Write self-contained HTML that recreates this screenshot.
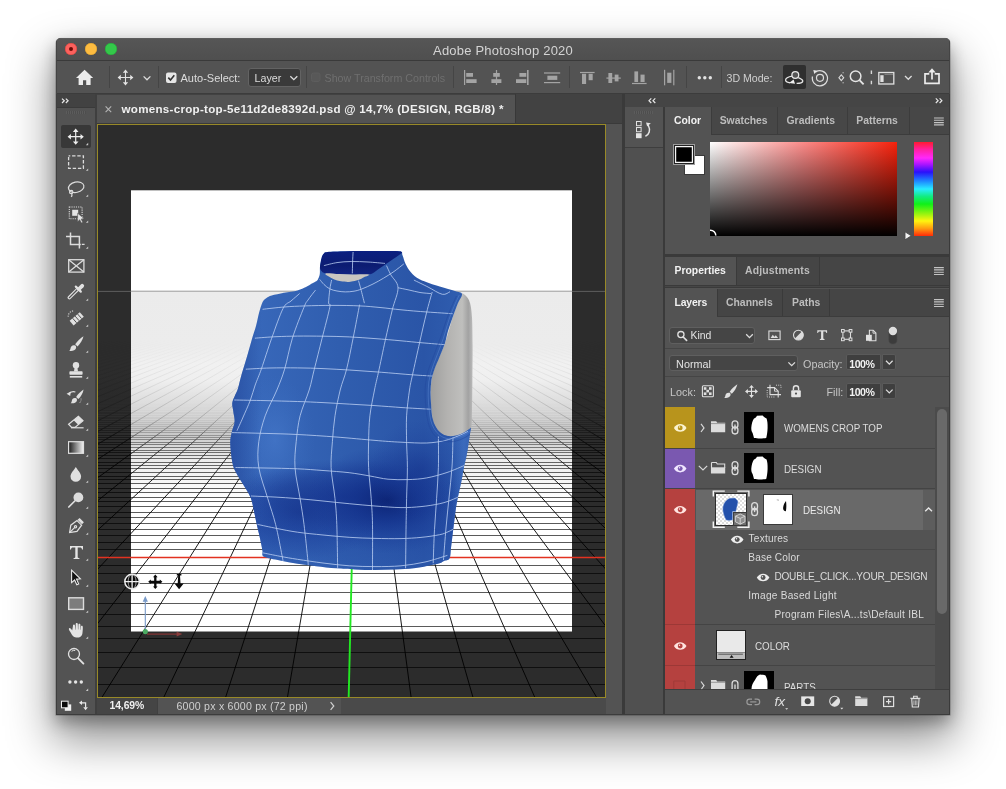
<!DOCTYPE html>
<html><head><meta charset="utf-8"><title>Adobe Photoshop 2020</title>
<style>
*{box-sizing:border-box;margin:0;padding:0}
html,body{width:1006px;height:789px;overflow:hidden;background:#fff;font-family:"Liberation Sans",sans-serif;}
body{position:relative}
.abs{position:absolute}
#win{position:absolute;left:56px;top:38px;width:894px;height:677px;background:#535353;border-radius:5px 5px 0 0;
 box-shadow:0 -1px 0 0 rgba(255,255,255,.5),0 0 0 .5px rgba(0,0,0,.3),0 22px 45px 4px rgba(0,0,0,.42),0 7px 16px rgba(0,0,0,.3);}
#clip{position:absolute;left:0;top:0;width:894px;height:677px;border-radius:5px 5px 0 0;overflow:hidden;will-change:transform}
.t{position:absolute;white-space:nowrap;color:#d6d6d6;font-size:11px;line-height:14px}
.b{font-weight:bold}
.sep{position:absolute;width:1px;background:#424242}
svg{position:absolute;overflow:visible}
</style></head><body>
<div id="win"><div id="clip">
<div id="c" style="position:absolute;left:-56px;top:-38px;width:1006px;height:789px">
<!-- title bar -->
<div class="abs" style="left:56px;top:38px;width:894px;height:22px;background:linear-gradient(#565656,#4f4f4f)"></div>
<div class="abs" style="left:56px;top:38px;width:894px;height:1px;background:#5c5c5c"></div>
<div class="abs" style="left:56px;top:60px;width:894px;height:1px;background:#3a3a3a"></div>
<div class="abs" style="left:65px;top:43px;width:12px;height:12px;border-radius:6px;background:#fc615d;box-shadow:inset 0 0 0 .5px #d8453f"></div>
<div class="abs" style="left:69px;top:47px;width:4px;height:4px;border-radius:2px;background:#6d0a05"></div>
<div class="abs" style="left:85px;top:43px;width:12px;height:12px;border-radius:6px;background:#fdbc40;box-shadow:inset 0 0 0 .5px #dba02f"></div>
<div class="abs" style="left:105px;top:43px;width:12px;height:12px;border-radius:6px;background:#34c84a;box-shadow:inset 0 0 0 .5px #24a83a"></div>
<div class="t" style="left:56px;top:43px;width:894px;text-align:center;font-size:13px;line-height:15px;color:#d4d4d4;letter-spacing:.2px">Adobe Photoshop 2020</div>
<!-- options bar -->
<div class="abs" style="left:56px;top:61px;width:894px;height:32px;background:#535353"></div>
<div class="abs" style="left:56px;top:93px;width:894px;height:1px;background:#3c3c3c"></div>
<!-- options bar content -->
<div class="sep" style="left:109px;top:66px;height:22px;background:#454545"></div>
<div class="sep" style="left:158px;top:66px;height:22px;background:#454545"></div>
<div class="sep" style="left:306px;top:66px;height:22px;background:#454545"></div>
<div class="sep" style="left:453px;top:66px;height:22px;background:#454545"></div>
<div class="sep" style="left:569px;top:66px;height:22px;background:#454545"></div>
<div class="sep" style="left:686px;top:66px;height:22px;background:#454545"></div>
<div class="sep" style="left:721px;top:66px;height:22px;background:#454545"></div>
<div class="abs" style="left:247.5px;top:68px;width:53px;height:19px;background:#3a3a3a;border:1px solid #636363;border-radius:3px"></div>
<div class="abs" style="left:783px;top:65px;width:23px;height:24px;background:#2f2f2f;border-radius:2px"></div>
<div class="t" style="left:180.5px;top:71px;font-size:11px;color:#dcdcdc">Auto-Select:</div>
<div class="t" style="left:254.5px;top:71px;font-size:10.7px;color:#dcdcdc">Layer</div>
<div class="t" style="left:324.5px;top:71px;font-size:10.7px;color:#6f6f6f">Show Transform Controls</div>
<div class="t" style="left:726.5px;top:71px;font-size:10.6px;color:#d0d0d0">3D Mode:</div>
<svg style="left:0;top:0" width="1006" height="789" viewBox="0 0 1006 789">
<!-- home -->
<path d="M84.6 69.8 L76 77.9 L78.6 77.9 L78.6 85 L83 85 L83 80.2 L86.2 80.2 L86.2 85 L90.6 85 L90.6 77.9 L93.2 77.9 Z" fill="#ececec"/>
<!-- move tool -->
<g stroke="#e4e4e4" stroke-width="1.1" fill="none"><path d="M125.5 71.5V83.5M119.5 77.5H131.5"/></g>
<g fill="#e4e4e4"><path d="M125.5 69.6l2.7 3.2h-5.4zM125.5 85.4l2.7-3.2h-5.4zM117.6 77.5l3.2-2.7v5.4zM133.4 77.5l-3.2-2.7v5.4z"/></g>
<path d="M143.6 76.4l3.4 3.4 3.4-3.4" stroke="#dcdcdc" stroke-width="1.3" fill="none"/>
<!-- checkbox checked -->
<rect x="166" y="72.5" width="10.5" height="10.5" rx="2" fill="#e6e6e6"/>
<path d="M168.3 77.6l2.2 2.4 3.8-4.8" stroke="#333" stroke-width="1.6" fill="none"/>
<path d="M290.3 76.2l3.5 3.5 3.5-3.5" stroke="#dcdcdc" stroke-width="1.3" fill="none"/>
<!-- disabled checkbox -->
<rect x="311.5" y="73" width="8.5" height="8.5" rx="2" fill="#585858" stroke="#5d5d5d" stroke-width="1"/>
<!-- align icons -->
<g fill="#a4a4a4">
<rect x="464" y="70" width="1.2" height="15"/><rect x="466.2" y="73" width="6.8" height="3.8"/><rect x="466.2" y="79.2" width="10.4" height="3.8"/>
<rect x="495.9" y="70" width="1.2" height="15"/><rect x="493.2" y="73" width="6.6" height="3.8"/><rect x="491.4" y="79.2" width="10" height="3.8"/>
<rect x="527" y="70" width="1.6" height="15"/><rect x="519.4" y="73" width="6.9" height="3.8"/><rect x="516" y="79.2" width="10.3" height="3.8"/>
<rect x="544" y="72.4" width="16.2" height="1.2"/><rect x="544" y="82" width="16.2" height="1.2"/><rect x="547.4" y="75.7" width="9.9" height="4.2"/>
<rect x="580" y="71.9" width="14.6" height="1.2"/><rect x="582" y="73.8" width="4.1" height="10.2"/><rect x="588.6" y="73.8" width="4.1" height="6.4"/>
<rect x="606.4" y="77.5" width="14.4" height="1.2"/><rect x="608.4" y="73" width="3.8" height="10"/><rect x="614.7" y="74.6" width="3.8" height="6.8"/>
<rect x="632" y="82.9" width="14.6" height="1.2"/><rect x="634.4" y="71.4" width="3.7" height="10.6"/><rect x="640.5" y="74.6" width="4.1" height="7.4"/>
<rect x="664" y="69.8" width="1.2" height="15.5"/><rect x="673.2" y="69.8" width="1.2" height="15.5"/><rect x="667.2" y="72.7" width="4.2" height="10.2"/>
</g>
<g fill="#e2e2e2"><circle cx="699.3" cy="77.8" r="1.7"/><circle cx="704.8" cy="77.8" r="1.7"/><circle cx="710.3" cy="77.8" r="1.7"/></g>
<!-- orbit -->
<g stroke="#e6e6e6" stroke-width="1.3" fill="none">
<circle cx="795.3" cy="75" r="3.4" fill="#555"/>
<path d="M792.2 76.1C788 76.6 785.200 78.600 785.600 80.400 C786.000 81.800 788.000 82.700 790.000 82.900"/>
<path d="M796.6 83.300 C800.000 83.400 803.000 82.600 802.800 81.000 C802.600 79.700 800.500 78.600 798.300 77.700"/>
</g>
<path d="M789 82.900 l4.600-3.400 l1.400 4.200z" fill="#f0f0f0"/>
<!-- roll -->
<g stroke="#dcdcdc" stroke-width="1.2" fill="none">
<path d="M815.700 71.900 A7.600 7.600 0 1 1 812.500 76.500"/>
<circle cx="820" cy="77.800" r="3.500"/>
</g>
<path d="M813.300 70.000 l4.000 0.800 l-3.000 3.200z" fill="#e8e8e8"/>
<!-- drag small -->
<path d="M841.300 74.800 l2.400 2.900 l-2.400 2.900 l-2.400 -2.900z" stroke="#d8d8d8" stroke-width="1.1" fill="none"/>
<g fill="#bdbdbd"><rect x="842.600" y="72.000" width="1" height="1.400"/><rect x="842.600" y="82.000" width="1" height="1.400"/></g>
<!-- search -->
<g stroke="#e4e4e4" stroke-width="1.500" fill="none"><circle cx="855.600" cy="76.300" r="5.300"/><path d="M859.500 80.200 L863.600 84.300" stroke-width="1.900"/></g>
<g fill="#d8d8d8"><path d="M870.700 70.500h1.400v3.400h-1.400zM870.700 80.800h1.400v3.400h-1.400z"/></g>
<!-- workspace -->
<rect x="878.800" y="72.500" width="15" height="11.500" stroke="#e0e0e0" stroke-width="1.300" fill="none"/>
<rect x="880.300" y="75.200" width="3.300" height="6.800" fill="#e0e0e0"/>
<path d="M884.500 74.300H893" stroke="#9a9a9a" stroke-width=".8"/>
<path d="M905 76l3.300 3.300 3.300-3.300" stroke="#dcdcdc" stroke-width="1.300" fill="none"/>
<!-- share -->
<g stroke="#ececec" stroke-width="1.700" fill="none"><path d="M929.300 73.900H925v9.400h14v-9.400h-4.300"/><path d="M932 79.500V70"/></g>
<path d="M932 68.300l3.700 4.200h-7.400z" fill="#ececec"/>
</svg>
<!-- left border -->
<div class="abs" style="left:56px;top:94px;width:1px;height:621px;background:#3e3e3e"></div>
<!-- toolbar header -->
<div class="abs" style="left:57px;top:94px;width:37.5px;height:12.5px;background:#424242"></div>
<div class="abs" style="left:57px;top:106.5px;width:37.5px;height:1px;background:#3a3a3a"></div>
<div class="abs" style="left:94.5px;top:94px;width:2.5px;height:621px;background:#3f3f3f"></div>
<!-- grip -->
<div class="abs" style="left:65.5px;top:111px;width:20px;height:3px;background:repeating-linear-gradient(90deg,#606060 0 1px,#4b4b4b 1px 2px);opacity:.7"></div>
<!-- active tool -->
<div class="abs" style="left:60.5px;top:124.5px;width:30.5px;height:23px;background:#383838;border-radius:2px"></div>
<!-- tab bar -->
<div class="abs" style="left:97px;top:94px;width:526px;height:30px;background:#424242"></div>
<div class="abs" style="left:97px;top:94.5px;width:417.5px;height:28px;background:#535353"></div>
<div class="abs" style="left:514.5px;top:94px;width:1px;height:29px;background:#383838"></div>
<div class="abs" style="left:97px;top:122.5px;width:526px;height:1.5px;background:#3a3a3a"></div>
<div class="t b" style="left:121.5px;top:102px;font-size:11.6px;color:#f0f0f0;letter-spacing:.28px" id="tabtxt">womens-crop-top-5e11d2de8392d.psd @ 14,7% (DESIGN, RGB/8) *</div>
<!-- status bar -->
<div class="abs" style="left:97px;top:698px;width:526px;height:17px;background:#4a4a4a"></div><div class="abs" style="left:606px;top:698px;width:17px;height:17px;background:#535353"></div>
<div class="abs" style="left:97px;top:698px;width:60px;height:17px;background:#454545"></div>
<div class="abs" style="left:157px;top:698px;width:184px;height:17px;background:#535353"></div>
<div class="abs" style="left:157px;top:698px;width:1px;height:17px;background:#404040"></div>
<div class="t" style="left:109.5px;top:699px;font-size:10.4px;color:#f0f0f0;font-weight:bold;letter-spacing:-.1px">14,69%</div>
<div class="t" style="left:176.5px;top:699px;font-size:10.6px;color:#cfcfcf;letter-spacing:.22px" id="sttxt">6000 px x 6000 px (72 ppi)</div>
<svg style="left:0;top:0" width="1006" height="789" viewBox="0 0 1006 789">
<g stroke="#e8e8e8" stroke-width="1.2" fill="none">
<path d="M62 98.600l2.300 2.200 -2.300 2.200M65.800 98.600l2.300 2.200 -2.300 2.200"/>
</g>
<path d="M105.600 106.300l5.600 5.800M111.200 106.300l-5.600 5.800" stroke="#b4b4b4" stroke-width="1.100" fill="none"/>
<path d="M330.600 702.200l3.200 3.800 -3.200 3.800" stroke="#d0d0d0" stroke-width="1.200" fill="none"/>
<!-- sub-tool triangles -->
<g fill="#c8c8c8">
<path d="M88.200 142.800v2.400h-2.400z"/><path d="M88.200 168.400v2.400h-2.400z"/><path d="M88.200 194.400v2.400h-2.400z"/><path d="M88.200 220.400v2.400h-2.400z"/><path d="M88.200 246.400v2.400h-2.400z"/>
<path d="M88.200 298.400v2.400h-2.400z"/><path d="M88.200 324.400v2.400h-2.400z"/><path d="M88.200 350.400v2.400h-2.400z"/><path d="M88.200 376.400v2.400h-2.400z"/><path d="M88.200 402.400v2.400h-2.400z"/>
<path d="M88.200 428.400v2.400h-2.400z"/><path d="M88.200 454.400v2.400h-2.400z"/><path d="M88.200 480.400v2.400h-2.400z"/><path d="M88.200 506.400v2.400h-2.400z"/><path d="M88.200 532.400v2.400h-2.400z"/>
<path d="M88.200 558.400v2.400h-2.400z"/><path d="M88.200 584.400v2.400h-2.400z"/><path d="M88.200 610.400v2.400h-2.400z"/><path d="M88.200 636.400v2.400h-2.400z"/><path d="M88.200 688.600v2.400h-2.400z"/>
</g>
<!-- move tool -->
<g stroke="#eeeeee" stroke-width="1.200" fill="none"><path d="M75.700 130.500V143M69.500 136.700H82"/></g>
<g fill="#eeeeee"><path d="M75.700 128.600l2.800 3.300h-5.600zM75.700 144.800l2.800-3.300h-5.600zM67.600 136.700l3.300-2.800v5.600zM83.800 136.700l-3.300-2.800v5.600z"/></g>
<!-- marquee -->
<rect x="68.600" y="155.800" width="14.800" height="12.600" stroke="#dcdcdc" stroke-width="1.300" stroke-dasharray="3.400 1.800" stroke-dashoffset="1.700" fill="none"/>
<!-- lasso -->
<g stroke="#dcdcdc" stroke-width="1.200" fill="none">
<ellipse cx="76.200" cy="187.200" rx="7.800" ry="5.200" transform="rotate(-12 76.200 187.200)"/>
<circle cx="71.200" cy="192" r="1.700"/><path d="M71.800 193.600c.4 1.300 .2 2.300-.6 3.200"/>
</g>
<!-- object select -->
<rect x="69.300" y="207" width="12.800" height="11.800" stroke="#dcdcdc" stroke-width="1.100" stroke-dasharray="1.100 1.100" fill="none"/>
<rect x="72.200" y="209.800" width="6" height="6" fill="#e4e4e4"/>
<path d="M77.600 213.200l6.600 5.400 -3 .5 1.600 3.200 -1.500 .7 -1.600-3.200 -2.100 2z" fill="#e4e4e4" stroke="#535353" stroke-width=".6"/>
<!-- crop -->
<g stroke="#dcdcdc" stroke-width="1.500" fill="none"><path d="M70.500 232.600V244.400H80.800M66 236.400H79.400V248.400"/><path d="M81.800 244.400h2.800" stroke-width="1.200"/></g>
<!-- frame -->
<g stroke="#dcdcdc" stroke-width="1.300" fill="none"><rect x="68.700" y="259.700" width="15.200" height="12.400"/><path d="M68.700 259.700L83.900 272.100M83.900 259.700L68.700 272.100"/></g>
<!-- eyedropper -->
<g stroke="#e0e0e0" fill="none"><path d="M69.400 297.600L77.600 289.400" stroke-width="3.600" stroke-linecap="round"/><path d="M69.400 297.600L77.200 289.800" stroke="#535353" stroke-width="1.300" stroke-linecap="round"/><path d="M75.800 286.600l5 5" stroke-width="2.200" stroke-linecap="round"/><path d="M79 289L82.200 285.800" stroke-width="3.800" stroke-linecap="round"/></g>
<!-- healing -->
<g><path d="M69.600 320.800L79.800 312.200 83.800 316.800 73.600 325.400z" fill="#e0e0e0"/><g stroke="#535353" stroke-width="1"><path d="M72.600 318.200l4 4.600M75.100 316.100l4 4.600M77.600 314l4 4.600"/></g>
<path d="M68.200 316.800c-.2-3.200 2.300-5.800 5.600-6" stroke="#cfcfcf" stroke-width="1.100" stroke-dasharray="1.200 1.200" fill="none"/></g>
<!-- brush -->
<g fill="#e0e0e0"><path d="M83.500 336.200c-2.800 1.600-6.300 5-8.300 8l2.300 2.200c2.700-2.400 5.200-6.600 6-10.200z"/><path d="M74.300 345.200c-2.200-.2-3.600 1.200-3.800 3.200-.1 1-.5 1.800-1.200 2.400 2.800 .6 5.800-.3 6.700-2.500 .4-1.100 0-2.200-.6-2.800z"/></g>
<!-- stamp -->
<g fill="#e0e0e0"><circle cx="76" cy="365.200" r="3.200"/><path d="M74.600 367.600h2.800l.6 4h-4z"/><rect x="69.400" y="371.200" width="13.200" height="3.600" rx=".8"/><rect x="69.800" y="376" width="12.400" height="1.600"/></g>
<!-- history brush -->
<g fill="#e0e0e0"><path d="M83.600 389.400c-2.600 1.500-5.600 4.600-7.500 7.600l2.200 2.100c2.500-2.300 4.700-6.200 5.300-9.700z"/><path d="M75.300 398c-2-.2-3.300 1.100-3.500 3-.1 .9-.4 1.600-1.100 2.200 2.600 .5 5.300-.3 6.100-2.300 .4-1 .1-2.100-.5-2.700z"/><path d="M66.600 393.800l4.200-2.400 -.6 4.600z"/></g>
<path d="M69.400 393.200c1.800-1.400 4.200-1.800 6-1.200" stroke="#e0e0e0" stroke-width="1.100" fill="none"/>
<path d="M81 398.500c.3 1.800-.2 3.300-1.500 4.500" stroke="#bdbdbd" stroke-width="1" stroke-dasharray="1 1" fill="none"/>
<!-- eraser -->
<g stroke="#e0e0e0" stroke-width="1.200" fill="none"><path d="M68.600 424.200L78.400 416.200 83 420.600 75 427.400H71.600z"/><path d="M71 427.800H83.600"/></g>
<path d="M73.600 420.200L78.400 416.200 83 420.600 78.200 424.700z" fill="#e0e0e0"/>
<!-- gradient -->
<defs><linearGradient id="tg" x1="0" x2="1"><stop offset="0" stop-color="#1a1a1a"/><stop offset="1" stop-color="#f4f4f4"/></linearGradient></defs>
<rect x="68.600" y="441.700" width="14.900" height="11.600" fill="url(#tg)" stroke="#e0e0e0" stroke-width="1.200"/>
<!-- blur drop -->
<path d="M75.800 467c1.600 2.900 5.300 6.200 5.300 9.400a5.300 5.300 0 0 1-10.600 0c0-3.200 3.700-6.500 5.300-9.400z" fill="#e0e0e0"/>
<!-- dodge -->
<circle cx="78.400" cy="497.400" r="4.900" fill="#dcdcdc"/><path d="M74.800 501L68.800 507" stroke="#e0e0e0" stroke-width="1.700" stroke-linecap="round"/>
<!-- pen -->
<g stroke="#e0e0e0" stroke-width="1.200" fill="none"><path d="M69.600 532.600l1.200-7.400 6.200-4.600 4.600 4.600 -4.600 6.200z"/><path d="M69.800 532.400l5-5"/><circle cx="75.500" cy="526.700" r="1.100"/></g>
<path d="M77.600 519.800l2-1.900 4.300 4.300 -1.900 2z" fill="#e0e0e0"/>
<!-- type -->
<path d="M70 546h13v3.400h-1c-.2-1.500-.7-2-2.200-2h-2.100v9.400c0 1 .4 1.300 1.800 1.400v.9h-6v-.9c1.400-.1 1.800-.4 1.800-1.400v-9.400h-2.100c-1.500 0-2 .5-2.200 2h-1z" fill="#e4e4e4"/>
<!-- path select -->
<path d="M71.600 570.200l8.800 8.600 -3.900 .3 2.200 4.800 -1.900 .9 -2.200-4.800 -3 2.600z" fill="#111" stroke="#e8e8e8" stroke-width="1.100"/>
<!-- rectangle -->
<rect x="68.700" y="597.800" width="14.800" height="11.600" fill="#7c7c7c" stroke="#dcdcdc" stroke-width="1.400"/>
<!-- hand -->
<path d="M72.200 630.400c-.9-1.400-2.200-2.600-3-2.200-.8 .5-.2 1.800 .8 3.400 1.100 1.800 2 3.700 3.500 4.900 1.300 1 3.300 1.200 5.200 .9 2.200-.4 3.400-2 3.700-4 .3-2.200 .5-4.600 .4-6.400 0-.8-.5-1.200-1-1.200-.6 0-.9.500-1 1.200l-.2 2.800h-.3l.1-4.800c0-.8-.4-1.300-1-1.300s-1 .5-1 1.300l-.1 4.600h-.3l-.2-5.400c0-.8-.5-1.300-1.100-1.300-.6 0-1 .5-1 1.300l.1 5.500h-.3l-.5-4.200c-.1-.8-.6-1.200-1.200-1.100-.6 .1-.9 .6-.8 1.400z" fill="#e4e4e4"/>
<!-- zoom -->
<g stroke="#e0e0e0" fill="none"><circle cx="74" cy="654" r="5.500" stroke-width="1.300"/><path d="M78 658.200L83.400 663.600" stroke-width="1.900" stroke-linecap="round"/><path d="M71.600 651.400a3.400 3.400 0 0 1 3.600-.9" stroke-width="1"/></g>
<!-- dots -->
<g fill="#e4e4e4"><circle cx="69.900" cy="682" r="1.700"/><circle cx="75.600" cy="682" r="1.700"/><circle cx="81.300" cy="682" r="1.700"/></g>
<!-- default colors / swap -->
<rect x="64.800" y="704.400" width="6.400" height="6.400" fill="#f0f0f0"/><rect x="61.500" y="701.200" width="6.600" height="6.600" fill="#0a0a0a" stroke="#f0f0f0" stroke-width="1"/>
<g stroke="#e8e8e8" stroke-width="1.200" fill="none"><path d="M81.600 702.800H85.600V707.400"/></g>
<path d="M79 702.800l3-2.300v4.600zM85.600 710.200l-2.300-3h4.600z" fill="#e8e8e8"/>
</svg>
<!-- canvas frame -->
<div class="abs" style="left:606px;top:124px;width:17px;height:574px;background:#535353"></div>
<div class="abs" style="left:97px;top:124px;width:509px;height:574px;background:#2c2c2c;overflow:hidden" id="canvas">
<svg style="left:-97px;top:-124px" width="1006" height="789" viewBox="0 0 1006 789">
<defs>
<clipPath id="cdoc"><rect x="131" y="190.3" width="441" height="440.99999999999994"/></clipPath>
<clipPath id="cgr"><rect x="97" y="291.0" width="509" height="407.0"/></clipPath>
<linearGradient id="gbase" x1="0" y1="291" x2="0" y2="631" gradientUnits="userSpaceOnUse"><stop offset="0" stop-color="#ebebeb"/><stop offset=".16" stop-color="#eeeeee"/><stop offset=".26" stop-color="#f4f4f4"/><stop offset=".36" stop-color="#ffffff"/><stop offset="1" stop-color="#ffffff"/></linearGradient>
<linearGradient id="fadeL" x1="0" y1="291" x2="0" y2="500" gradientUnits="userSpaceOnUse"><stop offset="0.000" stop-color="#ebebeb" stop-opacity="1"/><stop offset="0.258" stop-color="#ececec" stop-opacity="1"/><stop offset="0.354" stop-color="#f1f1f1" stop-opacity="1"/><stop offset="0.426" stop-color="#f2f2f2" stop-opacity="0.985"/><stop offset="0.522" stop-color="#f2f2f2" stop-opacity="0.9"/><stop offset="0.569" stop-color="#f4f4f4" stop-opacity="0.84"/><stop offset="0.617" stop-color="#f6f6f6" stop-opacity="0.76"/><stop offset="0.665" stop-color="#fafafa" stop-opacity="0.56"/><stop offset="0.713" stop-color="#ffffff" stop-opacity="0.32"/><stop offset="0.761" stop-color="#ffffff" stop-opacity="0.18"/><stop offset="0.809" stop-color="#ffffff" stop-opacity="0.1"/><stop offset="0.904" stop-color="#ffffff" stop-opacity="0.04"/><stop offset="1.000" stop-color="#ffffff" stop-opacity="0"/></linearGradient>
<linearGradient id="fadeD" x1="0" y1="291" x2="0" y2="500" gradientUnits="userSpaceOnUse"><stop offset="0.000" stop-color="#2c2c2c" stop-opacity="1"/><stop offset="0.258" stop-color="#2c2c2c" stop-opacity="1"/><stop offset="0.354" stop-color="#2c2c2c" stop-opacity="1"/><stop offset="0.426" stop-color="#2c2c2c" stop-opacity="0.985"/><stop offset="0.522" stop-color="#2c2c2c" stop-opacity="0.9"/><stop offset="0.569" stop-color="#2c2c2c" stop-opacity="0.84"/><stop offset="0.617" stop-color="#2c2c2c" stop-opacity="0.76"/><stop offset="0.665" stop-color="#2c2c2c" stop-opacity="0.56"/><stop offset="0.713" stop-color="#2c2c2c" stop-opacity="0.32"/><stop offset="0.761" stop-color="#2c2c2c" stop-opacity="0.18"/><stop offset="0.809" stop-color="#2c2c2c" stop-opacity="0.1"/><stop offset="0.904" stop-color="#2c2c2c" stop-opacity="0.04"/><stop offset="1.000" stop-color="#2c2c2c" stop-opacity="0"/></linearGradient>
<linearGradient id="rmg" x1="0" y1="340" x2="0" y2="470" gradientUnits="userSpaceOnUse"><stop offset="0" stop-color="#fff" stop-opacity="0"/><stop offset=".15" stop-color="#fff" stop-opacity=".03"/><stop offset=".35" stop-color="#fff" stop-opacity=".09"/><stop offset=".62" stop-color="#fff" stop-opacity=".2"/><stop offset=".8" stop-color="#fff" stop-opacity=".2"/><stop offset="1" stop-color="#fff" stop-opacity="0"/></linearGradient>
<mask id="rm" maskUnits="userSpaceOnUse" x="97" y="340" width="509" height="130"><rect x="97" y="340" width="509" height="130" fill="url(#rmg)"/></mask>
</defs>
<rect x="131" y="190.3" width="441" height="440.99999999999994" fill="#fff"/>
<rect x="131" y="291.0" width="441" height="340.29999999999995" fill="url(#gbase)"/>
<g clip-path="url(#cgr)" stroke="#000" stroke-width="1" fill="none" shape-rendering="auto">
<path d="M97 684.50H606M97 667.50H606M97 652.50H606M97 638.50H606M97 626.50H606M97 614.50H606M97 603.50H606M97 592.50H606M97 583.50H606M97 573.50H606M97 565.50H606M97 549.50H606M97 542.50H606M97 535.50H606M97 529.50H606M97 523.50H606M97 517.50H606M97 512.50H606M97 506.50H606M97 501.50H606M97 497.50H606M97 492.50H606M97 488.50H606M97 483.50H606M97 479.50H606M97 476.50H606M97 472.50H606M97 468.50H606M97 465.50H606M97 462.50H606M97 458.50H606M97 455.50H606M97 452.50H606M97 450.50H606M97 447.50H606M97 444.50H606M97 442.50H606M97 439.50H606M97 437.50H606M97 435.50H606M97 432.50H606M97 430.50H606M97 428.50H606M97 426.50H606M97 424.50H606M97 422.50H606M97 420.50H606M97 418.50H606M97 417.50H606M97 415.50H606M97 413.50H606M97 412.50H606M97 410.42H606M97 408.87H606M97 407.36H606M97 405.89H606M97 404.46H606M97 403.06H606M97 401.69H606M97 400.36H606M97 399.06H606M97 397.79H606M97 396.55H606M97 395.34H606M97 394.16H606M97 393.00H606M97 391.87H606M97 390.76H606M97 389.68H606M97 388.62H606M97 387.58H606M97 386.57H606M97 385.57H606M97 384.60H606M97 383.64H606M97 382.71H606M97 381.79H606M97 380.90H606M97 380.02H606M97 379.15H606M97 378.31H606M97 377.48H606M97 376.66H606M97 375.86H606M97 375.08H606M97 374.31H606M97 373.55H606M97 372.81H606M97 372.08H606M97 371.36H606M97 370.66H606M97 369.96H606M97 369.28H606M97 368.62H606M97 367.96H606M97 367.31H606M97 366.68H606M97 366.05H606M97 365.44H606M97 364.83H606M97 364.24H606M97 363.65H606M97 363.08H606M97 362.51H606M97 361.95H606M97 361.40H606M97 360.86H606M97 360.33H606M97 359.80H606M97 359.29H606M97 358.78H606M97 358.28H606M97 357.78H606M97 357.30H606M97 356.82H606M97 356.34H606M97 355.88H606M97 355.42H606M97 354.96H606M97 354.52H606M97 354.08H606M97 353.64H606M97 353.21H606M97 352.79H606M97 352.37H606M97 351.96H606M97 351.55H606M97 351.15H606M97 350.76H606M97 350.37H606M97 349.98H606M97 349.60H606M97 349.23H606M97 348.86H606M97 348.49H606M97 348.13H606M97 347.77H606M97 347.42H606M97 347.07H606M97 346.73H606M97 346.39H606M97 346.05H606M97 345.72H606M97 345.40H606M97 345.07H606M97 344.75H606M97 344.44H606M97 344.12H606M97 343.82H606M97 343.51H606M97 343.21H606M97 342.91H606M97 342.62H606M97 342.32H606M97 342.04H606M97 341.75H606M97 341.47H606M97 341.19H606M97 340.92H606M97 340.64H606M97 340.37H606M97 340.11H606M97 339.84H606M97 339.58H606M97 339.32H606M97 339.07H606M97 338.81H606M97 338.56H606M97 338.32H606M97 338.07H606" stroke-width=".65"/>
<path d="M69.97 338L-2128.55 698M77.12 338L-2066.60 698M84.28 338L-2004.66 698M91.43 338L-1942.71 698M98.58 338L-1880.77 698M105.74 338L-1818.82 698M112.89 338L-1756.88 698M120.04 338L-1694.93 698M127.20 338L-1632.99 698M134.35 338L-1571.04 698M141.50 338L-1509.10 698M148.66 338L-1447.15 698M155.81 338L-1385.20 698M162.97 338L-1323.26 698M170.12 338L-1261.31 698M177.27 338L-1199.37 698M184.43 338L-1137.42 698M191.58 338L-1075.48 698M198.73 338L-1013.53 698M205.89 338L-951.59 698M213.04 338L-889.64 698M220.19 338L-827.70 698M227.35 338L-765.75 698M234.50 338L-703.80 698M241.65 338L-641.86 698M248.81 338L-579.91 698M255.96 338L-517.97 698M263.11 338L-456.02 698M270.27 338L-394.08 698M277.42 338L-332.13 698M284.57 338L-270.19 698M291.73 338L-208.24 698M298.88 338L-146.30 698M306.03 338L-84.35 698M313.19 338L-22.41 698M320.34 338L39.54 698M327.49 338L101.49 698M334.65 338L163.43 698M341.80 338L225.38 698M348.95 338L287.32 698M363.26 338L411.21 698M370.41 338L473.16 698M377.57 338L535.10 698M384.72 338L597.05 698M391.87 338L658.99 698M399.03 338L720.94 698M406.18 338L782.88 698M413.33 338L844.83 698M420.49 338L906.78 698M427.64 338L968.72 698M434.79 338L1030.67 698M441.95 338L1092.61 698M449.10 338L1154.56 698M456.25 338L1216.50 698M463.41 338L1278.45 698M470.56 338L1340.39 698M477.71 338L1402.34 698M484.87 338L1464.28 698M492.02 338L1526.23 698M499.17 338L1588.17 698M506.33 338L1650.12 698M513.48 338L1712.07 698M520.64 338L1774.01 698M527.79 338L1835.96 698M534.94 338L1897.90 698M542.10 338L1959.85 698M549.25 338L2021.79 698M556.40 338L2083.74 698M563.56 338L2145.68 698M570.71 338L2207.63 698M577.86 338L2269.57 698M585.02 338L2331.52 698M592.17 338L2393.47 698M599.32 338L2455.41 698M606.48 338L2517.36 698M613.63 338L2579.30 698M620.78 338L2641.25 698M627.94 338L2703.19 698M635.09 338L2765.14 698M642.24 338L2827.08 698" stroke-width=".9"/>
</g>
<rect x="97" y="291.0" width="509" height="209.0" fill="url(#fadeD)"/>
<rect x="131" y="291.0" width="441" height="209.0" fill="url(#fadeL)"/>
<g clip-path="url(#cgr)" mask="url(#rm)"><path d="M57.76 340L-736.15 470M65.21 340L-708.91 470M72.67 340L-681.67 470M80.13 340L-654.42 470M87.59 340L-627.18 470M95.05 340L-599.93 470M102.50 340L-572.69 470M109.96 340L-545.45 470M117.42 340L-518.20 470M124.88 340L-490.96 470M132.34 340L-463.72 470M139.79 340L-436.47 470M147.25 340L-409.23 470M154.71 340L-381.98 470M162.17 340L-354.74 470M169.62 340L-327.50 470M177.08 340L-300.25 470M184.54 340L-273.01 470M192.00 340L-245.76 470M199.46 340L-218.52 470M206.91 340L-191.28 470M214.37 340L-164.03 470M221.83 340L-136.79 470M229.29 340L-109.55 470M236.74 340L-82.30 470M244.20 340L-55.06 470M251.66 340L-27.81 470M259.12 340L-0.57 470M266.58 340L26.67 470M274.03 340L53.92 470M281.49 340L81.16 470M288.95 340L108.40 470M296.41 340L135.65 470M303.86 340L162.89 470M311.32 340L190.14 470M318.78 340L217.38 470M326.24 340L244.62 470M333.70 340L271.87 470M341.15 340L299.11 470M348.61 340L326.36 470M356.07 340L353.60 470M363.53 340L380.84 470M370.98 340L408.09 470M378.44 340L435.33 470M385.90 340L462.57 470M393.36 340L489.82 470M400.82 340L517.06 470M408.27 340L544.31 470M415.73 340L571.55 470M423.19 340L598.79 470M430.65 340L626.04 470M438.10 340L653.28 470M445.56 340L680.52 470M453.02 340L707.77 470M460.48 340L735.01 470M467.94 340L762.26 470M475.39 340L789.50 470M482.85 340L816.74 470M490.31 340L843.99 470M497.77 340L871.23 470M505.22 340L898.47 470M512.68 340L925.72 470M520.14 340L952.96 470M527.60 340L980.21 470M535.06 340L1007.45 470M542.51 340L1034.69 470M549.97 340L1061.94 470M557.43 340L1089.18 470M564.89 340L1116.43 470M572.35 340L1143.67 470M579.80 340L1170.91 470M587.26 340L1198.16 470M594.72 340L1225.40 470M602.18 340L1252.64 470M609.63 340L1279.89 470M617.09 340L1307.13 470M624.55 340L1334.38 470M632.01 340L1361.62 470M639.47 340L1388.86 470M646.92 340L1416.11 470M654.38 340L1443.35 470" stroke="#000" stroke-width=".8" fill="none"/></g>
<path d="M97 291.4H606" stroke="#5e5e5e" stroke-width="1"/>
<path d="M131 291.4H572" stroke="#b4b4b4" stroke-width="1.1"/>
<path d="M97 557.5H606" stroke="#e23220" stroke-width="1.5"/>
<path d="M351.72 569L348.67 698" stroke="#22e822" stroke-width="1.9"/>
<defs>
<clipPath id="gclip"><path d="M327.4 251.9C331.0 251.5 338.7 251.3 345.0 251.2C351.3 251.0 358.3 251.0 365.0 251.0C371.7 251.0 379.1 250.9 385.0 251.0C390.9 251.1 397.3 250.6 400.2 251.3C403.1 252.1 401.7 253.4 402.6 255.5C403.5 257.6 404.2 261.1 405.6 263.9C407.0 266.7 408.5 269.6 410.9 272.2C413.3 274.8 415.2 277.0 420.0 279.4C424.8 281.8 433.9 284.6 439.7 286.5C445.5 288.4 451.3 289.8 455.0 291.0C458.7 292.2 461.5 292.0 462.0 294.0C462.5 296.0 459.6 299.1 458.0 303.0C456.4 306.9 454.3 312.8 452.6 317.5C450.9 322.2 449.3 326.7 448.0 331.0C446.7 335.3 446.3 339.1 444.9 343.4C443.5 347.7 441.2 352.7 439.5 357.0C437.8 361.3 435.8 365.4 434.5 369.2C433.2 373.0 432.1 376.2 431.5 380.0C430.9 383.8 430.7 387.7 430.6 392.0C430.6 396.3 430.9 401.7 431.2 406.0C431.5 410.3 431.7 414.5 432.5 418.0C433.3 421.5 434.6 424.5 436.0 427.0C437.4 429.5 439.0 431.5 441.0 433.0C443.0 434.5 445.5 435.6 448.0 436.0C450.5 436.4 453.5 436.0 456.0 435.5C458.5 435.0 460.9 434.0 463.0 433.0C465.1 432.0 467.2 430.3 468.5 429.5C469.8 428.7 470.6 427.2 470.8 428.0C471.1 428.8 470.4 431.3 470.0 434.0C469.6 436.7 469.0 440.6 468.5 444.0C468.0 447.4 467.6 450.8 466.8 454.6C466.1 458.4 464.9 462.7 464.0 467.0C463.1 471.3 462.5 476.2 461.6 480.5C460.7 484.8 459.7 488.7 458.8 493.0C457.9 497.3 456.9 501.8 456.2 506.3C455.5 510.8 455.0 515.3 454.4 520.0C453.8 524.7 453.2 530.0 452.6 534.7C452.0 539.4 451.5 544.0 451.0 548.0C450.5 552.0 450.7 556.3 449.5 558.5C448.3 560.7 445.6 560.2 444.0 561.0C442.4 561.8 442.5 562.4 439.7 563.2C436.9 564.0 431.3 565.1 427.0 566.0C422.7 566.9 419.2 567.7 413.9 568.3C408.6 568.9 401.5 569.3 395.0 569.6C388.5 569.9 381.7 570.1 375.0 570.1C368.3 570.1 361.4 569.7 355.0 569.4C348.6 569.1 342.8 568.8 336.3 568.3C329.8 567.8 322.5 567.0 316.0 566.2C309.5 565.4 303.5 564.7 297.5 563.7C291.5 562.7 285.6 561.6 280.0 560.4C274.4 559.2 266.9 558.3 264.0 556.7C261.1 555.1 262.9 553.0 262.5 551.0C262.1 549.0 262.0 548.0 261.4 545.0C260.8 542.0 259.7 536.9 258.8 533.0C257.9 529.1 257.0 525.6 256.2 521.8C255.4 518.0 254.7 513.9 253.8 510.0C252.9 506.1 252.3 502.1 251.0 498.6C249.7 495.1 247.7 492.0 246.0 489.0C244.3 486.0 242.4 483.2 240.7 480.5C239.0 477.8 237.3 475.1 236.0 472.5C234.7 469.9 233.7 468.2 232.9 465.0C232.1 461.8 231.4 456.9 231.0 453.0C230.6 449.1 230.2 445.2 230.3 441.7C230.4 438.2 231.1 435.3 231.8 432.0C232.5 428.7 234.3 425.3 234.6 422.0C234.9 418.7 233.8 415.2 233.4 412.0C233.0 408.8 232.0 405.8 232.3 403.0C232.6 400.2 234.1 397.8 235.0 395.5C235.9 393.2 236.6 392.8 237.8 389.0C239.0 385.2 240.4 378.4 242.0 373.0C243.6 367.6 245.5 361.8 247.1 356.3C248.7 350.8 250.2 345.2 251.7 340.0C253.2 334.8 255.0 329.8 256.2 325.3C257.4 320.8 257.9 316.9 259.0 313.0C260.1 309.1 261.4 304.5 262.6 302.0C263.9 299.5 265.0 299.1 266.5 298.0C268.0 296.9 268.8 296.5 271.7 295.6C274.6 294.7 279.7 293.7 284.0 292.8C288.3 291.9 293.8 291.4 297.5 290.4C301.2 289.4 303.6 288.1 306.0 287.0C308.4 285.9 310.3 284.4 311.9 283.5C313.5 282.6 314.6 282.2 315.6 281.5C316.6 280.8 317.2 280.5 317.9 279.4C318.6 278.2 319.3 276.8 319.7 274.6C320.1 272.4 319.7 269.0 320.0 266.2C320.3 263.4 320.9 260.0 321.5 257.9C322.1 255.8 322.6 254.8 323.6 253.8C324.6 252.8 323.8 252.3 327.4 251.9z"/></clipPath>
<linearGradient id="gb1" x1="230" y1="0" x2="472" y2="0" gradientUnits="userSpaceOnUse"><stop offset="0" stop-color="#3463b4"/><stop offset=".12" stop-color="#3767b9"/><stop offset=".45" stop-color="#305eaf"/><stop offset=".8" stop-color="#2a55a7"/><stop offset="1" stop-color="#3160b2"/></linearGradient>
<radialGradient id="gs1" cx="388" cy="500" r="72" gradientUnits="userSpaceOnUse" gradientTransform="translate(388 500) scale(1.15 .75) translate(-388 -500)"><stop offset="0" stop-color="#0b2273" stop-opacity=".95"/><stop offset=".4" stop-color="#12308a" stop-opacity=".7"/><stop offset="1" stop-color="#1c3f9a" stop-opacity="0"/></radialGradient>
<radialGradient id="gs2" cx="300" cy="512" r="60" gradientUnits="userSpaceOnUse" gradientTransform="translate(300 512) scale(1.4 .8) translate(-300 -512)"><stop offset="0" stop-color="#17368f" stop-opacity=".75"/><stop offset=".6" stop-color="#1c3f9a" stop-opacity=".35"/><stop offset="1" stop-color="#1c3f9a" stop-opacity="0"/></radialGradient>
<radialGradient id="gs3" cx="420" cy="470" r="50" gradientUnits="userSpaceOnUse"><stop offset="0" stop-color="#17368f" stop-opacity=".6"/><stop offset="1" stop-color="#1c3f9a" stop-opacity="0"/></radialGradient>
<radialGradient id="gh1" cx="275" cy="440" r="50" gradientUnits="userSpaceOnUse" gradientTransform="translate(275 440) scale(.8 1.3) translate(-275 -440)"><stop offset="0" stop-color="#4a7dcf" stop-opacity=".55"/><stop offset="1" stop-color="#3d70c2" stop-opacity="0"/></radialGradient>
<radialGradient id="gs4" cx="345" cy="497" r="100" gradientUnits="userSpaceOnUse" gradientTransform="translate(345 497) scale(1.1 .38) translate(-345 -497)"><stop offset="0" stop-color="#14308a" stop-opacity=".7"/><stop offset=".6" stop-color="#18378f" stop-opacity=".4"/><stop offset="1" stop-color="#1c3f9a" stop-opacity="0"/></radialGradient>
<linearGradient id="gsh" x1="0" y1="480" x2="0" y2="570" gradientUnits="userSpaceOnUse"><stop offset="0" stop-color="#1c3f9a" stop-opacity="0"/><stop offset=".55" stop-color="#1d429d" stop-opacity=".45"/><stop offset="1" stop-color="#2a55ac" stop-opacity=".15"/></linearGradient>
<linearGradient id="gedgeL" x1="228" y1="0" x2="262" y2="0" gradientUnits="userSpaceOnUse"><stop offset="0" stop-color="#24489c" stop-opacity=".7"/><stop offset="1" stop-color="#24489c" stop-opacity="0"/></linearGradient>
<linearGradient id="gside" x1="452" y1="0" x2="472" y2="0" gradientUnits="userSpaceOnUse"><stop offset="0" stop-color="#4676c8" stop-opacity="0"/><stop offset=".6" stop-color="#4676c8" stop-opacity=".5"/><stop offset="1" stop-color="#3b69bc" stop-opacity=".3"/></linearGradient>
<linearGradient id="garm" x1="430" y1="0" x2="473" y2="0" gradientUnits="userSpaceOnUse"><stop offset="0" stop-color="#9e9e9d"/><stop offset=".4" stop-color="#b3b2b0"/><stop offset=".75" stop-color="#bfbfbd"/><stop offset=".89" stop-color="#a2a2a2"/><stop offset="1" stop-color="#bdbdbd"/></linearGradient>
<linearGradient id="gnavy" x1="0" y1="251" x2="0" y2="280" gradientUnits="userSpaceOnUse"><stop offset="0" stop-color="#0a1f80"/><stop offset=".5" stop-color="#0c1c72"/><stop offset="1" stop-color="#14288a"/></linearGradient>
</defs>
<path d="M461.0 293.5C462.3 292.5 464.5 294.4 466.0 296.0C467.5 297.6 469.0 299.4 470.0 303.0C471.0 306.6 471.6 310.5 472.0 317.5C472.4 324.5 472.5 334.6 472.6 345.0C472.7 355.4 472.5 369.2 472.4 380.0C472.3 390.8 472.2 402.0 472.0 410.0C471.8 418.0 472.2 424.3 471.2 428.0C470.2 431.7 468.2 430.7 466.0 432.0C463.8 433.3 460.8 435.2 458.0 436.0C455.2 436.8 451.8 436.9 449.0 436.5C446.2 436.1 443.2 435.1 441.0 433.5C438.8 431.9 437.4 429.6 436.0 427.0C434.6 424.4 433.4 422.5 432.5 418.0C431.6 413.5 431.0 406.3 430.8 400.0C430.6 393.7 430.6 386.0 431.5 380.0C432.4 374.0 433.8 370.1 436.0 364.0C438.2 357.9 442.1 351.1 444.9 343.4C447.7 335.6 450.4 324.4 452.6 317.5C454.8 310.6 456.6 306.0 458.0 302.0C459.4 298.0 459.7 294.5 461.0 293.5z" fill="url(#garm)"/>
<path d="M327.4 251.9C331.0 251.5 338.7 251.3 345.0 251.2C351.3 251.0 358.3 251.0 365.0 251.0C371.7 251.0 379.1 250.9 385.0 251.0C390.9 251.1 397.3 250.6 400.2 251.3C403.1 252.1 401.7 253.4 402.6 255.5C403.5 257.6 404.2 261.1 405.6 263.9C407.0 266.7 408.5 269.6 410.9 272.2C413.3 274.8 415.2 277.0 420.0 279.4C424.8 281.8 433.9 284.6 439.7 286.5C445.5 288.4 451.3 289.8 455.0 291.0C458.7 292.2 461.5 292.0 462.0 294.0C462.5 296.0 459.6 299.1 458.0 303.0C456.4 306.9 454.3 312.8 452.6 317.5C450.9 322.2 449.3 326.7 448.0 331.0C446.7 335.3 446.3 339.1 444.9 343.4C443.5 347.7 441.2 352.7 439.5 357.0C437.8 361.3 435.8 365.4 434.5 369.2C433.2 373.0 432.1 376.2 431.5 380.0C430.9 383.8 430.7 387.7 430.6 392.0C430.6 396.3 430.9 401.7 431.2 406.0C431.5 410.3 431.7 414.5 432.5 418.0C433.3 421.5 434.6 424.5 436.0 427.0C437.4 429.5 439.0 431.5 441.0 433.0C443.0 434.5 445.5 435.6 448.0 436.0C450.5 436.4 453.5 436.0 456.0 435.5C458.5 435.0 460.9 434.0 463.0 433.0C465.1 432.0 467.2 430.3 468.5 429.5C469.8 428.7 470.6 427.2 470.8 428.0C471.1 428.8 470.4 431.3 470.0 434.0C469.6 436.7 469.0 440.6 468.5 444.0C468.0 447.4 467.6 450.8 466.8 454.6C466.1 458.4 464.9 462.7 464.0 467.0C463.1 471.3 462.5 476.2 461.6 480.5C460.7 484.8 459.7 488.7 458.8 493.0C457.9 497.3 456.9 501.8 456.2 506.3C455.5 510.8 455.0 515.3 454.4 520.0C453.8 524.7 453.2 530.0 452.6 534.7C452.0 539.4 451.5 544.0 451.0 548.0C450.5 552.0 450.7 556.3 449.5 558.5C448.3 560.7 445.6 560.2 444.0 561.0C442.4 561.8 442.5 562.4 439.7 563.2C436.9 564.0 431.3 565.1 427.0 566.0C422.7 566.9 419.2 567.7 413.9 568.3C408.6 568.9 401.5 569.3 395.0 569.6C388.5 569.9 381.7 570.1 375.0 570.1C368.3 570.1 361.4 569.7 355.0 569.4C348.6 569.1 342.8 568.8 336.3 568.3C329.8 567.8 322.5 567.0 316.0 566.2C309.5 565.4 303.5 564.7 297.5 563.7C291.5 562.7 285.6 561.6 280.0 560.4C274.4 559.2 266.9 558.3 264.0 556.7C261.1 555.1 262.9 553.0 262.5 551.0C262.1 549.0 262.0 548.0 261.4 545.0C260.8 542.0 259.7 536.9 258.8 533.0C257.9 529.1 257.0 525.6 256.2 521.8C255.4 518.0 254.7 513.9 253.8 510.0C252.9 506.1 252.3 502.1 251.0 498.6C249.7 495.1 247.7 492.0 246.0 489.0C244.3 486.0 242.4 483.2 240.7 480.5C239.0 477.8 237.3 475.1 236.0 472.5C234.7 469.9 233.7 468.2 232.9 465.0C232.1 461.8 231.4 456.9 231.0 453.0C230.6 449.1 230.2 445.2 230.3 441.7C230.4 438.2 231.1 435.3 231.8 432.0C232.5 428.7 234.3 425.3 234.6 422.0C234.9 418.7 233.8 415.2 233.4 412.0C233.0 408.8 232.0 405.8 232.3 403.0C232.6 400.2 234.1 397.8 235.0 395.5C235.9 393.2 236.6 392.8 237.8 389.0C239.0 385.2 240.4 378.4 242.0 373.0C243.6 367.6 245.5 361.8 247.1 356.3C248.7 350.8 250.2 345.2 251.7 340.0C253.2 334.8 255.0 329.8 256.2 325.3C257.4 320.8 257.9 316.9 259.0 313.0C260.1 309.1 261.4 304.5 262.6 302.0C263.9 299.5 265.0 299.1 266.5 298.0C268.0 296.9 268.8 296.5 271.7 295.6C274.6 294.7 279.7 293.7 284.0 292.8C288.3 291.9 293.8 291.4 297.5 290.4C301.2 289.4 303.6 288.1 306.0 287.0C308.4 285.9 310.3 284.4 311.9 283.5C313.5 282.6 314.6 282.2 315.6 281.5C316.6 280.8 317.2 280.5 317.9 279.4C318.6 278.2 319.3 276.8 319.7 274.6C320.1 272.4 319.7 269.0 320.0 266.2C320.3 263.4 320.9 260.0 321.5 257.9C322.1 255.8 322.6 254.8 323.6 253.8C324.6 252.8 323.8 252.3 327.4 251.9z" fill="url(#gb1)"/>
<g clip-path="url(#gclip)">
<rect x="225" y="245" width="255" height="330" fill="url(#gsh)"/>
<rect x="225" y="245" width="255" height="330" fill="url(#gh1)"/>
<rect x="225" y="245" width="255" height="330" fill="url(#gs2)"/>
<rect x="225" y="245" width="255" height="330" fill="url(#gs4)"/>
<rect x="225" y="245" width="255" height="330" fill="url(#gs1)"/>
<rect x="225" y="245" width="255" height="330" fill="url(#gs3)"/>
<rect x="225" y="296" width="40" height="280" fill="url(#gedgeL)"/>
<path d="M452 436L472 428L472 470L452 560L440 566Z" fill="url(#gside)"/>
<path d="M327.4 251.9C334.3 251.4 352.9 251.1 365.0 251.0C377.1 250.9 394.2 250.9 400.2 251.3C406.2 251.7 402.0 252.3 401.0 253.5C400.0 254.7 396.5 256.8 394.0 258.5C391.5 260.2 388.6 262.1 385.9 263.9C383.2 265.7 380.8 267.7 378.0 269.5C375.2 271.3 373.2 273.8 369.2 274.6C365.1 275.5 358.7 274.7 353.7 274.6C348.7 274.5 344.1 274.4 339.4 274.2C334.7 274.0 328.7 274.0 325.6 273.4C322.5 272.8 321.9 271.7 321.0 270.5C320.1 269.3 319.9 268.3 320.0 266.2C320.1 264.1 320.9 260.0 321.5 257.9C322.1 255.8 322.6 254.8 323.6 253.8C324.6 252.8 320.5 252.4 327.4 251.9z" fill="url(#gnavy)"/>
<path d="M325.6 273.4C327.2 272.9 334.7 273.9 339.4 274.1C344.1 274.3 348.7 274.3 353.7 274.4C358.7 274.5 367.5 274.1 369.2 274.6C370.9 275.1 365.6 276.5 364.0 277.3C362.4 278.1 361.4 278.8 359.6 279.4C357.8 280.0 355.0 280.8 353.0 281.2C351.0 281.6 349.7 281.9 347.7 281.9C345.7 281.9 343.0 281.6 341.0 281.3C339.0 281.0 337.6 280.7 335.8 280.0C334.0 279.3 331.7 278.3 330.0 277.2C328.3 276.1 324.0 273.9 325.6 273.4z" fill="#c9c6c0"/>
<path d="M299.6 293.5C298.2 294.8 293.8 298.5 291.0 301.0C288.2 303.5 286.3 302.2 283.1 308.4C279.9 314.6 275.3 328.2 271.7 338.2C268.1 348.2 264.2 360.8 261.5 368.6C258.8 376.4 257.1 379.7 255.2 385.0C253.3 390.3 252.4 394.8 250.3 400.3C248.2 405.8 244.9 412.9 242.7 418.0C240.5 423.1 237.9 428.6 237.0 430.7" stroke="#bcd0f3" stroke-width="1" fill="none" stroke-opacity=".8"/>
<path d="M315.5 290.1C314.2 291.8 309.9 297.1 308.0 300.0C306.1 302.9 306.6 300.8 304.0 307.2C301.4 313.6 295.6 327.9 292.4 338.2C289.2 348.5 287.2 360.6 284.6 369.2C282.0 377.8 280.1 382.2 276.9 390.0C273.7 397.8 268.2 407.2 265.2 415.8C262.2 424.4 259.9 433.1 258.8 441.7C257.7 450.3 257.3 458.0 258.8 467.5C260.3 477.0 265.0 489.1 267.8 498.6C270.6 508.1 273.2 514.9 275.6 524.4C278.0 533.9 280.8 549.3 282.0 555.4C283.2 561.5 282.8 560.1 283.0 561.0" stroke="#bcd0f3" stroke-width="1" fill="none" stroke-opacity=".8"/>
<path d="M331.6 280.0C331.3 281.6 330.3 285.6 329.8 289.5C329.3 293.4 328.6 300.2 328.6 303.2C328.6 306.1 330.9 301.4 329.8 307.2C328.7 313.0 324.7 327.9 322.1 338.2C319.5 348.5 316.5 360.6 314.3 369.2C312.1 377.8 311.6 382.2 309.2 390.0C306.8 397.8 302.3 407.2 300.1 415.8C297.9 424.4 297.1 433.1 296.2 441.7C295.3 450.3 294.4 458.0 295.0 467.5C295.6 477.0 298.6 489.1 300.1 498.6C301.6 508.1 302.7 514.1 304.0 524.4C305.3 534.7 307.2 553.8 307.9 560.6C308.6 567.4 308.0 564.3 308.0 565.0" stroke="#bcd0f3" stroke-width="1" fill="none" stroke-opacity=".8"/>
<path d="M358.5 280.6C358.9 282.0 359.8 285.1 360.8 288.9C361.8 292.7 363.8 300.8 364.4 303.2" stroke="#bcd0f3" stroke-width="1" fill="none" stroke-opacity=".8"/>
<path d="M359.6 304.6C358.5 310.2 355.3 327.4 353.1 338.2C350.9 349.0 348.8 360.6 346.6 369.2C344.5 377.8 342.1 382.2 340.2 390.0C338.3 397.8 336.3 407.2 335.0 415.8C333.7 424.4 333.0 433.1 332.4 441.7C331.8 450.3 330.7 458.0 331.1 467.5C331.5 477.0 334.1 489.1 335.0 498.6C335.9 508.1 336.4 513.2 336.8 524.4C337.2 535.6 337.5 558.4 337.6 565.8C337.7 573.1 337.6 568.0 337.6 568.5" stroke="#bcd0f3" stroke-width="1" fill="none" stroke-opacity=".8"/>
<path d="M386.5 265.6C387.2 267.1 388.8 270.9 390.7 274.6C392.6 278.3 397.7 281.7 398.0 287.6C398.3 293.5 394.4 301.0 392.3 309.8C390.2 318.6 387.6 329.8 385.3 340.2C383.0 350.6 380.2 364.2 378.4 372.5C376.6 380.8 375.9 382.8 374.5 390.0C373.1 397.2 370.9 407.2 369.9 415.8C368.9 424.4 368.8 433.1 368.6 441.7C368.4 450.3 368.2 458.0 368.6 467.5C369.0 477.0 370.6 489.1 371.2 498.6C371.8 508.1 372.3 512.8 372.5 524.4C372.7 536.0 372.5 560.7 372.5 568.3C372.5 575.9 372.5 569.7 372.5 570.0" stroke="#bcd0f3" stroke-width="1" fill="none" stroke-opacity=".8"/>
<path d="M432.2 292.0C431.2 295.5 428.6 304.4 426.5 312.9C424.4 321.3 421.9 332.4 419.6 342.7C417.3 352.9 414.3 366.5 412.6 374.4C410.9 382.3 410.5 383.1 409.5 390.0C408.5 396.9 407.1 407.2 406.6 415.8C406.1 424.4 406.5 433.1 406.6 441.7C406.7 450.3 407.4 458.0 407.4 467.5C407.4 477.0 406.8 489.1 406.6 498.6C406.4 508.1 406.3 512.8 406.1 524.4C405.9 536.0 405.7 561.0 405.6 568.3" stroke="#bcd0f3" stroke-width="1" fill="none" stroke-opacity=".8"/>
<path d="M438.4 436.5C438.4 441.7 438.7 457.1 438.4 467.5C438.1 477.9 437.2 488.2 436.6 498.6C436.0 509.0 435.1 518.8 434.5 529.6C433.9 540.4 433.4 557.6 433.2 563.2" stroke="#bcd0f3" stroke-width="1" fill="none" stroke-opacity=".8"/>
<path d="M453.0 437.5C452.8 442.4 452.7 456.9 452.0 467.0C451.3 477.1 450.0 487.8 449.0 498.0C448.0 508.2 446.9 517.7 446.0 528.0C445.1 538.3 443.9 554.7 443.5 560.0" stroke="#bcd0f3" stroke-width="1" fill="none" stroke-opacity=".8"/>
<path d="M353.1 252.0C353.0 253.7 352.7 258.4 352.6 262.0C352.5 265.6 352.4 271.5 352.3 273.4" stroke="#bcd0f3" stroke-width="1" fill="none" stroke-opacity=".8"/>
<path d="M262.6 309.3C266.2 308.9 276.9 307.6 284.0 307.0C291.1 306.4 297.3 306.2 305.3 305.9C313.3 305.6 322.9 305.4 332.0 305.4C341.1 305.4 351.6 305.5 359.6 305.9C367.6 306.2 373.1 306.9 380.0 307.5C386.9 308.1 393.2 309.1 401.0 309.8C408.8 310.6 418.4 311.4 427.0 312.0C435.6 312.6 448.3 313.4 452.6 313.7" stroke="#bcd0f3" stroke-width="1" fill="none" stroke-opacity=".8"/>
<path d="M254.9 338.2C258.4 337.9 268.9 337.0 276.0 336.7C283.1 336.4 289.7 336.2 297.5 336.1C305.3 336.0 314.4 336.1 323.0 336.2C331.6 336.3 340.5 336.5 349.2 336.9C357.9 337.3 366.4 338.0 375.0 338.6C383.6 339.2 393.2 340.1 401.0 340.8C408.8 341.5 414.7 342.2 422.0 342.8C429.3 343.4 441.2 344.4 445.0 344.7" stroke="#bcd0f3" stroke-width="1" fill="none" stroke-opacity=".8"/>
<path d="M245.8 369.2C249.8 369.0 261.4 368.2 270.0 368.0C278.6 367.8 288.7 367.8 297.5 367.9C306.3 368.0 314.4 368.2 323.0 368.6C331.6 369.0 340.5 369.5 349.2 370.0C357.9 370.5 366.4 371.2 375.0 371.8C383.6 372.4 393.8 373.3 401.0 373.9C408.2 374.5 412.4 374.8 418.0 375.2C423.6 375.6 431.8 376.0 434.5 376.2" stroke="#bcd0f3" stroke-width="1" fill="none" stroke-opacity=".8"/>
<path d="M234.2 400.0C239.3 400.1 254.4 400.4 265.0 400.6C275.6 400.9 287.8 401.2 297.5 401.5C307.2 401.8 314.4 402.2 323.0 402.6C331.6 403.0 340.5 403.6 349.2 404.1C357.9 404.6 366.4 405.0 375.0 405.6C383.6 406.2 394.2 407.0 401.0 407.5C407.8 408.0 411.1 408.1 416.0 408.4C420.9 408.7 428.2 409.1 430.6 409.2" stroke="#bcd0f3" stroke-width="1" fill="none" stroke-opacity=".8"/>
<path d="M231.6 432.6C237.2 432.7 254.0 433.1 265.0 433.4C276.0 433.7 285.7 433.9 297.5 434.5C309.3 435.1 323.1 436.0 336.0 437.0C348.9 438.0 364.2 439.5 375.0 440.4C385.8 441.3 392.4 441.8 401.0 442.2C409.6 442.6 419.5 443.3 426.8 443.0C434.1 442.7 439.8 441.7 445.0 440.5C450.2 439.3 454.2 437.5 458.0 436.0C461.8 434.5 466.3 432.2 468.0 431.4" stroke="#bcd0f3" stroke-width="1" fill="none" stroke-opacity=".8"/>
<path d="M235.5 467.5C240.4 467.6 254.7 467.8 265.0 468.0C275.3 468.2 287.8 468.4 297.5 468.8C307.2 469.2 314.4 469.9 323.0 470.5C331.6 471.1 341.4 471.8 349.2 472.7C357.0 473.6 363.5 474.9 370.0 476.0C376.5 477.1 381.7 478.6 388.0 479.2C394.3 479.8 401.5 479.8 408.0 479.6C414.5 479.4 420.3 479.1 426.8 477.9C433.3 476.7 440.6 474.6 447.0 472.5C453.4 470.4 462.4 466.2 465.5 465.0" stroke="#bcd0f3" stroke-width="1" fill="none" stroke-opacity=".8"/>
<path d="M251.0 496.0C254.8 496.2 266.2 496.6 274.0 497.0C281.8 497.4 289.3 497.9 297.5 498.6C305.7 499.3 314.4 500.1 323.0 501.0C331.6 501.9 340.5 502.9 349.2 503.7C357.9 504.5 366.4 505.4 375.0 506.0C383.6 506.6 393.3 507.5 401.0 507.6C408.7 507.7 414.6 507.2 421.0 506.6C427.4 506.0 434.7 504.8 439.7 503.7C444.7 502.6 447.6 501.5 451.0 500.2C454.4 498.9 458.8 496.7 460.4 496.0" stroke="#bcd0f3" stroke-width="1" fill="none" stroke-opacity=".8"/>
<path d="M257.5 524.4C260.8 525.1 270.3 527.2 277.0 528.5C283.7 529.8 289.8 531.1 297.5 532.2C305.2 533.3 314.4 534.1 323.0 535.0C331.6 535.9 340.5 536.7 349.2 537.3C357.9 537.9 366.4 538.2 375.0 538.4C383.6 538.6 393.3 538.8 401.0 538.6C408.7 538.4 414.6 538.0 421.0 537.4C427.4 536.8 435.2 535.6 439.7 534.7C444.2 533.8 445.4 532.9 448.0 531.8C450.6 530.7 454.0 528.9 455.2 528.3" stroke="#bcd0f3" stroke-width="1" fill="none" stroke-opacity=".8"/>
<path d="M262.6 552.8C265.5 553.4 274.2 555.2 280.0 556.3C285.8 557.4 290.3 558.2 297.5 559.3C304.7 560.4 314.4 561.9 323.0 563.0C331.6 564.1 340.5 565.2 349.2 565.8C357.9 566.4 366.4 566.6 375.0 566.6C383.6 566.6 392.7 566.6 401.0 565.8C409.3 565.0 417.3 563.7 425.0 562.0C432.7 560.3 443.7 556.5 447.4 555.4" stroke="#bcd0f3" stroke-width="1" fill="none" stroke-opacity=".8"/>
<path d="M319.7 279.4C320.4 280.2 322.3 282.9 324.0 284.5C325.7 286.1 327.6 287.8 329.8 288.9C332.0 290.0 334.4 290.5 337.0 291.0C339.6 291.5 342.5 291.9 345.3 291.9C348.1 291.9 351.2 291.7 354.0 291.2C356.8 290.7 358.8 290.1 362.0 288.9C365.2 287.7 369.4 285.8 373.0 284.0C376.6 282.2 380.0 280.3 383.5 278.2C387.0 276.1 390.6 273.9 394.0 271.5C397.4 269.1 402.2 265.2 403.8 263.9" stroke="#bcd0f3" stroke-width="1" fill="none" stroke-opacity=".8"/>
<path d="M323.9 265.6C326.1 265.1 332.4 263.3 337.0 262.6C341.6 261.9 346.1 261.6 351.3 261.5C356.5 261.4 362.4 261.7 368.0 262.0C373.6 262.3 382.2 263.2 385.0 263.4" stroke="#bcd0f3" stroke-width="1" fill="none" stroke-opacity=".8"/>
<path d="M397.8 287.7C399.7 288.1 405.3 289.2 409.0 290.0C412.7 290.8 416.3 291.9 420.0 292.5C423.7 293.1 429.2 293.4 431.0 293.6" stroke="#bcd0f3" stroke-width="1" fill="none" stroke-opacity=".8"/>
<path d="M413.9 280.1C416.2 281.2 423.3 284.6 428.0 287.0C432.7 289.4 438.6 293.5 442.3 294.3C446.0 295.1 448.7 292.1 450.0 291.7" stroke="#bcd0f3" stroke-width="1" fill="none" stroke-opacity=".8"/>
<path d="M456.5 296.0C455.6 298.0 452.8 303.8 451.0 308.0C449.2 312.2 447.5 316.8 446.0 321.0C444.5 325.2 443.5 329.2 442.0 333.5C440.5 337.8 438.6 342.8 437.0 347.0C435.4 351.2 434.0 355.0 432.5 359.0C431.0 363.0 429.1 367.0 428.0 371.0C426.9 375.0 426.1 378.8 425.6 383.0C425.1 387.2 425.1 391.7 425.2 396.0C425.3 400.3 425.6 404.8 426.0 409.0C426.4 413.2 426.9 417.3 427.8 421.0C428.7 424.7 429.9 428.2 431.5 431.0C433.1 433.8 435.1 436.2 437.5 438.0C439.9 439.8 442.9 441.0 446.0 441.5C449.1 442.0 452.8 441.7 456.0 441.0C459.2 440.3 462.5 438.8 465.0 437.5C467.5 436.2 470.0 434.2 471.0 433.5" stroke="#24499f" stroke-width="1" fill="none" stroke-opacity=".55"/>
<path d="M459.3 295.0C458.4 296.9 455.7 302.4 454.0 306.5C452.3 310.6 450.4 315.3 449.0 319.5C447.6 323.7 446.8 327.2 445.5 331.5C444.2 335.8 442.6 340.6 441.0 345.0C439.4 349.4 437.6 353.8 436.0 358.0C434.4 362.2 432.7 366.5 431.5 370.5C430.3 374.5 429.4 377.8 428.8 382.0C428.2 386.2 428.2 391.7 428.2 396.0C428.2 400.3 428.6 404.1 429.0 408.0C429.4 411.9 429.7 416.1 430.5 419.5C431.3 422.9 432.5 425.9 434.0 428.5C435.5 431.1 437.3 433.3 439.5 435.0C441.7 436.7 444.2 438.0 447.0 438.5C449.8 439.0 453.2 438.6 456.0 438.0C458.8 437.4 461.6 436.2 464.0 435.0C466.4 433.8 469.4 431.7 470.5 431.0" stroke="#5b86d2" stroke-width=".9" fill="none" stroke-opacity=".55"/>
</g>
<g><circle cx="132.100" cy="581.600" r="7.300" fill="#0c0c0c" stroke="#ededed" stroke-width="1.500"/><ellipse cx="132.100" cy="581.600" rx="4" ry="7.300" fill="none" stroke="#dddddd" stroke-width=".7"/><path d="M124.800 581.600h14.600M132.100 574.300v14.600" stroke="#f0f0f0" stroke-width="1.300"/></g>
<g stroke="#0a0a0a" stroke-width="2.300"><path d="M155.300 576.500v10.600M150 581.800h10.600"/></g><path d="M155.300 574.600l2.300 2.600h-4.600zM155.300 589l2.300-2.600h-4.600zM148.200 581.800l2.600-2.300v4.600zM162.400 581.800l-2.600-2.300v4.600z" fill="#0a0a0a"/>
<path d="M176.800 574h4.600v1.400h-1.400l.5 8h3.200l-4.600 5.800 -4.600-5.800h3.200l.5-8h-1.400z" fill="#0a0a0a"/>
<path d="M145.300 629V600.500" stroke="#7699c8" stroke-width="1.100"/><path d="M145.300 596l2.600 5.800h-5.200z" fill="#7699c8"/>
<path d="M147 634.100H177" stroke="#7c3434" stroke-width="1.400"/><path d="M182.400 634.100l-5.800 2.300v-4.600z" fill="#8a3c3c"/>
<circle cx="145.300" cy="631.600" r="2.600" fill="#4cab63"/>
</svg>
</div>
<div class="abs" style="left:97px;top:124px;width:509px;height:574px;border:1px solid #988928;pointer-events:none"></div>
<!-- right collapsed strip -->
<div class="abs" style="left:622px;top:94px;width:2.5px;height:621px;background:#3a3a3a"></div>
<div class="abs" style="left:624.5px;top:94px;width:325.5px;height:12.500px;background:#454545"></div>
<div class="abs" style="left:624.5px;top:106.500px;width:325.5px;height:.8px;background:#3a3a3a"></div>
<div class="abs" style="left:624.5px;top:107px;width:38px;height:608px;background:#505050"></div>
<div class="abs" style="left:624.5px;top:107px;width:38px;height:40px;background:#535353"></div>
<div class="abs" style="left:624.5px;top:147px;width:38px;height:1px;background:#3e3e3e"></div>
<div class="abs" style="left:662.5px;top:107px;width:2.5px;height:608px;background:#3a3a3a"></div>
<div class="abs" style="left:634px;top:110.500px;width:19px;height:3px;background:repeating-linear-gradient(90deg,#606060 0 1px,#4b4b4b 1px 2px);opacity:.7"></div>
<svg style="left:0;top:0" width="1006" height="789" viewBox="0 0 1006 789">
<g stroke="#e8e8e8" stroke-width="1.200" fill="none">
<path d="M651.300 98.400l-2.300 2.300 2.300 2.300M655.300 98.400l-2.300 2.300 2.300 2.300"/>
<path d="M935.800 98.400l2.300 2.300 -2.300 2.300M939.600 98.400l2.300 2.300 -2.300 2.300"/>
</g>
<!-- history icon -->
<g stroke="#e0e0e0" stroke-width="1" fill="none"><rect x="636.500" y="121.500" width="4.600" height="4.200"/><rect x="636.500" y="127.500" width="4.600" height="4.200"/></g>
<rect x="636" y="133.200" width="5.600" height="5" fill="#e4e4e4"/>
<path d="M645.400 136.200c3.800-1.400 5.400-6 2.800-11.200" stroke="#e4e4e4" stroke-width="1.500" fill="none"/>
<path d="M646 122.600l4.800 .6 -3.600 3.400z" fill="#e4e4e4"/>
</svg>
<!-- Color panel -->
<div class="abs" style="left:665px;top:107px;width:283.500px;height:147px;background:#535353"></div>
<div class="abs" style="left:948.5px;top:94px;width:1.5px;height:621px;background:#3a3a3a"></div>
<div class="abs" style="left:711px;top:107px;width:237.500px;height:27.500px;background:#474747"></div>
<div class="abs" style="left:711px;top:134px;width:237.500px;height:1px;background:#3c3c3c"></div>
<div class="sep" style="left:710.500px;top:107px;height:27.500px;background:#3c3c3c"></div>
<div class="sep" style="left:776.500px;top:107px;height:27.500px;background:#3c3c3c"></div>
<div class="sep" style="left:846.500px;top:107px;height:27.500px;background:#3c3c3c"></div>
<div class="sep" style="left:908.500px;top:107px;height:27.500px;background:#3c3c3c"></div>
<div class="t b" style="left:674px;top:113.500px;font-size:10.4px;color:#f2f2f2" id="tcolor">Color</div>
<div class="t b" style="left:719.700px;top:113.500px;font-size:10.4px;color:#bdbdbd" id="tsw">Swatches</div>
<div class="t b" style="left:786.500px;top:113.500px;font-size:10.4px;color:#bdbdbd" id="tgr">Gradients</div>
<div class="t b" style="left:856.300px;top:113.500px;font-size:10.4px;color:#bdbdbd" id="tpa">Patterns</div>
<!-- swatches -->
<div class="abs" style="left:685px;top:155.500px;width:18.500px;height:18.800px;background:#fff;box-shadow:0 0 0 1px #3a3a3a"></div>
<div class="abs" style="left:673.300px;top:144.200px;width:21.400px;height:21.200px;background:#000;border:1px solid #9c9c9c;box-shadow:inset 0 0 0 1px #222, inset 0 0 0 2.200px #f4f4f4"></div>
<!-- color field -->
<div class="abs" style="left:710px;top:142px;width:187px;height:93.500px;background:linear-gradient(to bottom,rgba(0,0,0,0),#000),linear-gradient(to right,#fff 0%,#fc8a88 50%,#f6220c 100%)"></div>
<div class="abs" style="left:914px;top:142px;width:19.300px;height:93.500px;background:linear-gradient(to bottom,#ff1a30 0%,#ff20a0 8%,#ff28fa 17%,#a814ff 24%,#2a10fa 32%,#1e80ff 41%,#28ecff 50%,#12ec80 58%,#10f018 66%,#90f410 76%,#fff410 84%,#ff9c10 92%,#ff2a08 100%)"></div>
<svg style="left:0;top:0" width="1006" height="789" viewBox="0 0 1006 789">
<defs><clipPath id="cfc"><rect x="710" y="142" width="187" height="93.5"/></clipPath></defs><circle cx="710.400" cy="235.600" r="5.400" stroke="#fff" stroke-width="1.500" fill="none" clip-path="url(#cfc)"/>
<path d="M905 231.800l6.400 4 -6.400 4z" fill="#f4f4f4" stroke="#4a4a4a" stroke-width=".9" stroke-linejoin="round"/>
<g stroke="#c4c4c4" stroke-width="1.100"><path d="M934 118h9.800M934 120.300h9.800M934 122.600h9.800M934 124.900h9.800"/></g>
</svg>
<!-- Properties / Layers panels -->
<div class="abs" style="left:665px;top:254px;width:283.5px;height:3px;background:#3a3a3a;"></div>
<div class="abs" style="left:665px;top:257px;width:283.5px;height:27.7px;background:#454545;"></div>
<div class="abs" style="left:665px;top:257px;width:71px;height:27.7px;background:#535353;"></div>
<div class="abs" style="left:736px;top:257px;width:1px;height:27.7px;background:#3a3a3a;"></div>
<div class="abs" style="left:818.5px;top:257px;width:1px;height:27.7px;background:#3a3a3a;"></div>
<div class="abs" style="left:665px;top:284.7px;width:283.5px;height:3.8px;background:#3a3a3a;"></div>
<div class="abs" style="left:665px;top:286.3px;width:283.5px;height:0.9px;background:#464646;"></div>
<div class="abs" style="left:665px;top:288.5px;width:283.5px;height:27.8px;background:#454545;"></div>
<div class="abs" style="left:665px;top:288.5px;width:52px;height:28.5px;background:#535353;"></div>
<div class="abs" style="left:717px;top:288.5px;width:1px;height:27.8px;background:#3a3a3a;"></div>
<div class="abs" style="left:782px;top:288.5px;width:1px;height:27.8px;background:#3a3a3a;"></div>
<div class="abs" style="left:829px;top:288.5px;width:1px;height:27.8px;background:#3a3a3a;"></div>
<div class="abs" style="left:717px;top:316.3px;width:231.5px;height:1px;background:#3c3c3c;"></div>
<div class="abs" style="left:665px;top:317.3px;width:283.5px;height:372px;background:#535353;"></div>
<div class="t" id="tprop" style="left:674.5px;top:263.90px;font-size:10.4px;color:#f2f2f2;font-weight:bold">Properties</div>
<div class="t" id="tadj" style="left:745px;top:263.90px;font-size:10.4px;color:#bdbdbd;font-weight:bold;letter-spacing:.18px">Adjustments</div>
<div class="t" id="tlay" style="left:674.5px;top:295.90px;font-size:10.4px;color:#f2f2f2;font-weight:bold;letter-spacing:-.15px">Layers</div>
<div class="t" id="tchan" style="left:726px;top:295.90px;font-size:10.4px;color:#bdbdbd;font-weight:bold">Channels</div>
<div class="t" id="tpath" style="left:792px;top:295.90px;font-size:10.4px;color:#bdbdbd;font-weight:bold">Paths</div>
<div class="abs" style="left:669.2px;top:327px;width:86.3px;height:16.8px;background:#454545;border:1px solid #5f5f5f;border-radius:3px"></div>
<div class="t" id="tkind" style="left:690.6px;top:328.70px;font-size:10.4px;color:#e2e2e2;">Kind</div>
<div class="abs" style="left:665px;top:348px;width:283.5px;height:1px;background:#454545;"></div>
<div class="abs" style="left:669.2px;top:354.6px;width:128.8px;height:16.6px;background:#454545;border:1px solid #5f5f5f;border-radius:3px"></div>
<div class="t" id="tnormal" style="left:676.1px;top:356.56px;font-size:10.8px;color:#e2e2e2;">Normal</div>
<div class="t" id="topac" style="left:803px;top:356.56px;font-size:10.8px;color:#c6c6c6;">Opacity:</div>
<div class="abs" style="left:846px;top:353.7px;width:35.4px;height:16.8px;background:#3f3f3f;border:1px solid #5a5a5a;border-radius:2px 0 0 2px"></div>
<div class="abs" style="left:882.4px;top:353.7px;width:13.8px;height:16.8px;background:#3f3f3f;border:1px solid #5a5a5a;border-radius:0 2px 2px 0"></div>
<div class="t" id="t100" style="left:849.2px;top:356.63px;font-size:10.6px;color:#f2f2f2;font-weight:bold;letter-spacing:-.45px">100%</div>
<div class="abs" style="left:665px;top:376px;width:283.5px;height:1px;background:#454545;"></div>
<div class="t" id="tlock" style="left:670.1px;top:384.56px;font-size:10.8px;color:#c6c6c6;">Lock:</div>
<div class="t" id="tfill" style="left:826.5px;top:384.56px;font-size:10.8px;color:#c6c6c6;">Fill:</div>
<div class="abs" style="left:846px;top:382.5px;width:35.4px;height:16.8px;background:#3f3f3f;border:1px solid #5a5a5a;border-radius:2px 0 0 2px"></div>
<div class="abs" style="left:882.4px;top:382.5px;width:13.8px;height:16.8px;background:#3f3f3f;border:1px solid #5a5a5a;border-radius:0 2px 2px 0"></div>
<div class="t" style="left:849.2px;top:384.63px;font-size:10.6px;color:#f2f2f2;font-weight:bold;letter-spacing:-.45px">100%</div>
<div class="abs" style="left:665px;top:406.5px;width:270px;height:282.5px;background:#535353;"></div>
<div class="abs" style="left:935px;top:406.5px;width:13.5px;height:282.5px;background:#4b4b4b;"></div>
<div class="abs" style="left:937px;top:409px;width:9.8px;height:204.5px;background:#696969;border-radius:5px"></div>
<div class="abs" style="left:665px;top:406.5px;width:29.6px;height:41px;background:#b8941c;"></div>
<div class="abs" style="left:665px;top:448.2px;width:29.6px;height:40.3px;background:#7a58b0;"></div>
<div class="abs" style="left:665px;top:489px;width:29.6px;height:200px;background:#b5413f;"></div>
<div class="abs" style="left:665px;top:447.5px;width:270px;height:0.9px;background:#444;"></div>
<div class="abs" style="left:665px;top:488.3px;width:270px;height:0.9px;background:#444;"></div>
<div class="abs" style="left:665px;top:624px;width:270px;height:0.9px;background:#444;"></div>
<div class="abs" style="left:665px;top:665.2px;width:270px;height:0.9px;background:#444;"></div>
<div class="abs" style="left:665px;top:624px;width:29.6px;height:0.9px;background:#9c3836;"></div>
<div class="abs" style="left:665px;top:665.2px;width:29.6px;height:0.9px;background:#9c3836;"></div>
<div class="abs" style="left:695.5px;top:490px;width:227px;height:39.6px;background:#696969;"></div>
<div class="abs" style="left:922.5px;top:490px;width:12.5px;height:39.6px;background:#5d5d5d;"></div>
<div class="abs" style="left:744px;top:549.3px;width:191px;height:0.8px;background:#484848;"></div>
<div class="abs" style="left:743.8px;top:412.2px;width:30.7px;height:30.4px;background:#000;overflow:hidden"><svg width="30.7" height="30.4" viewBox="0 0 30.7 30.4" style="left:0;top:0"><path d="M13 3.800L18.600 3.600C19.500 4.500 20.500 5.800 22.600 6.600C23.400 9 23.700 12 23.600 16C23.500 20 22.800 24 22.200 26C19 26.700 13 26.600 10 26C9.500 24 9 22.500 8.600 21C7.500 19.500 7.200 17.500 7.300 15.500C7.600 12 8.500 9 9.800 6.800C11.500 6 12.500 5 13 3.800Z" fill="#fff"/></svg></div>
<div class="abs" style="left:743.8px;top:453.1px;width:30.7px;height:30.4px;background:#000;overflow:hidden"><svg width="30.7" height="30.4" viewBox="0 0 30.7 30.4" style="left:0;top:0"><path d="M13 3.800L18.600 3.600C19.500 4.500 20.500 5.800 22.600 6.600C23.400 9 23.700 12 23.600 16C23.500 20 22.800 24 22.200 26C19 26.700 13 26.600 10 26C9.500 24 9 22.500 8.600 21C7.500 19.500 7.200 17.500 7.300 15.500C7.600 12 8.500 9 9.800 6.800C11.500 6 12.500 5 13 3.800Z" fill="#fff"/></svg></div>
<div class="abs" style="left:743.8px;top:670.9px;width:30.7px;height:18.1px;background:#000;overflow:hidden"><svg width="30.7" height="30.4" viewBox="0 0 30.7 30.4" style="left:0;top:0"><path d="M11 9c1.500-3 3-5 5-5.500 2 .3 4 .3 5.500 1 1 2 1.800 4 2 6v20H7.500v-12c0-4 1.500-7 3.500-9.500z" fill="#fff"/></svg></div>
<div class="abs" style="left:714.8px;top:492.8px;width:32.6px;height:33px;background-color:#fff;background-image:linear-gradient(45deg,#dedede 25%,transparent 25%,transparent 75%,#dedede 75%),linear-gradient(45deg,#dedede 25%,transparent 25%,transparent 75%,#dedede 75%);background-size:4px 4px;background-position:0 0,2px 2px;border:1.5px solid #2e2e2e"></div>
<div class="abs" style="left:733px;top:511.6px;width:14.4px;height:14.2px;background:#6e6e6e;border:1px solid #3c3c3c"></div>
<div class="abs" style="left:762.6px;top:494px;width:30.8px;height:31.3px;background:#fff;border:1px solid #3a3a3a"></div>
<div class="abs" style="left:715.5px;top:629.6px;width:30.3px;height:30.2px;background:#e9e9e9;border:1px solid #222"></div>
<div class="abs" style="left:716.5px;top:651.6px;width:28.3px;height:7.2px;background:#bcbcbc;border-top:1px solid #8a8a8a"></div>
<div class="abs" style="left:665px;top:689px;width:283.5px;height:26px;background:#535353;"></div>
<div class="abs" style="left:665px;top:689px;width:283.5px;height:0.9px;background:#3e3e3e;"></div>
<div class="t" id="tl1" style="left:783.5px;top:420.76px;font-size:10.8px;color:#dcdcdc;transform:scaleX(.907);transform-origin:0 0">WOMENS CROP TOP</div>
<div class="t" id="tl2" style="left:783.5px;top:461.86px;font-size:10.8px;color:#dcdcdc;transform:scaleX(.907);transform-origin:0 0">DESIGN</div>
<div class="t" id="tl3" style="left:802.7px;top:502.86px;font-size:10.8px;color:#eaeaea;transform:scaleX(.907);transform-origin:0 0">DESIGN</div>
<div class="t" id="ts1" style="left:748.6px;top:531.90px;font-size:10.1px;color:#dadada;letter-spacing:.2px">Textures</div>
<div class="t" id="ts2" style="left:748.3px;top:550.60px;font-size:10.1px;color:#dadada;letter-spacing:.15px">Base Color</div>
<div class="t" id="ts3" style="left:774.4px;top:569.50px;font-size:10.1px;color:#dadada;letter-spacing:-.22px">DOUBLE_CLICK...YOUR_DESIGN</div>
<div class="t" id="ts4" style="left:748.3px;top:588.50px;font-size:10.1px;color:#dadada;letter-spacing:.26px">Image Based Light</div>
<div class="t" id="ts5" style="left:774.4px;top:607.70px;font-size:10.1px;color:#dadada;letter-spacing:.26px">Program Files\A...ts\Default IBL</div>
<div class="t" id="tl4" style="left:755.1px;top:638.86px;font-size:10.8px;color:#dcdcdc;transform:scaleX(.907);transform-origin:0 0">COLOR</div>
<div class="abs" style="left:665px;top:666px;width:270px;height:23px;overflow:hidden">
<div class="t" style="left:118.5px;top:14.06px;font-size:10.8px;color:#dcdcdc;transform:scaleX(.907);transform-origin:0 0">PARTS</div></div>
<svg style="left:0;top:0" width="1006" height="789" viewBox="0 0 1006 789">
<path d="M673.9000000000001 427.9C676.735 422.775 683.6650000000001 422.775 686.5 427.9C683.6650000000001 433.025 676.735 433.025 673.9000000000001 427.9z" fill="#fbf3d0"/>
<circle cx="680.2" cy="427.9" r="2.46" fill="#b8941c"/><circle cx="679.5" cy="427.09999999999997" r=".75" fill="#fbf3d0"/>
<path d="M673.9000000000001 468.6C676.735 463.475 683.6650000000001 463.475 686.5 468.6C683.6650000000001 473.725 676.735 473.725 673.9000000000001 468.6z" fill="#f0e6ff"/>
<circle cx="680.2" cy="468.6" r="2.46" fill="#7a58b0"/><circle cx="679.5" cy="467.8" r=".75" fill="#f0e6ff"/>
<path d="M673.9000000000001 509.8C676.735 504.675 683.6650000000001 504.675 686.5 509.8C683.6650000000001 514.925 676.735 514.925 673.9000000000001 509.8z" fill="#ffe4e0"/>
<circle cx="680.2" cy="509.8" r="2.46" fill="#b5413f"/><circle cx="679.5" cy="509.0" r=".75" fill="#ffe4e0"/>
<path d="M673.9000000000001 646C676.735 640.875 683.6650000000001 640.875 686.5 646C683.6650000000001 651.125 676.735 651.125 673.9000000000001 646z" fill="#ffe4e0"/>
<circle cx="680.2" cy="646" r="2.46" fill="#b5413f"/><circle cx="679.5" cy="645.2" r=".75" fill="#ffe4e0"/>
<path d="M730.9000000000001 539.6C733.735 534.475 740.6650000000001 534.475 743.5 539.6C740.6650000000001 544.725 733.735 544.725 730.9000000000001 539.6z" fill="#eeeeee"/>
<circle cx="737.2" cy="539.6" r="2.46" fill="#535353"/><circle cx="736.5" cy="538.8000000000001" r=".75" fill="#eeeeee"/>
<path d="M756.8000000000001 577.5C759.635 572.375 766.565 572.375 769.4 577.5C766.565 582.625 759.635 582.625 756.8000000000001 577.5z" fill="#eeeeee"/>
<circle cx="763.1" cy="577.5" r="2.46" fill="#535353"/><circle cx="762.4" cy="576.7" r=".75" fill="#eeeeee"/>
<path d="M673.8 689V681h11.200V689" stroke="#a03a38" stroke-width="1" fill="none"/>
<g stroke="#c4c4c4" stroke-width="1.100"><path d="M934 267.6h9.800M934 269.9h9.800M934 272.2h9.800M934 274.5h9.800"/></g>
<g stroke="#c4c4c4" stroke-width="1.100"><path d="M934 299.6h9.800M934 301.9h9.800M934 304.2h9.800M934 306.5h9.800"/></g>
<g stroke="#e0e0e0" fill="none"><circle cx="680.900" cy="334.600" r="3.100" stroke-width="1.300"/><path d="M683.200 337l3.400 3.300" stroke-width="1.700" stroke-linecap="round"/></g>
<path d="M746.200 334.300l3.300 3.300 3.300-3.300" stroke="#dcdcdc" stroke-width="1.300" fill="none"/>
<path d="M788.400 362.400l3.300 3.300 3.300-3.300" stroke="#dcdcdc" stroke-width="1.300" fill="none"/>
<path d="M886 360.800l3.300 3.300 3.300-3.300M886 389.600l3.300 3.300 3.300-3.300" stroke="#dcdcdc" stroke-width="1.300" fill="none"/>
<rect x="768.900" y="331" width="11.200" height="8.600" stroke="#dcdcdc" stroke-width="1.100" fill="none"/><path d="M770.600 338l2.200-3.200 1.600 2 1.400-1.600 2.300 2.800z" fill="#dcdcdc"/>
<circle cx="798.400" cy="335.100" r="4.900" stroke="#dcdcdc" stroke-width="1.100" fill="none"/><path d="M801.900 331.600A4.900 4.900 0 0 1 794.900 338.600z" fill="#dcdcdc"/>
<path d="M817.300 330.200h9.800v2.800h-.8c-.2-1.200-.6-1.600-1.700-1.600h-1.300v6.700c0 .8 .3 1 1.300 1.100v.8h-4.800v-.8c1-.1 1.300-.3 1.300-1.100v-6.700h-1.300c-1.100 0-1.500 .4-1.700 1.600h-.8z" fill="#e0e0e0"/>
<g stroke="#dcdcdc" stroke-width="1.100" fill="none"><rect x="842.900" y="330.900" width="7.600" height="8.400"/></g><g fill="#535353" stroke="#dcdcdc" stroke-width="1"><rect x="841.500" y="329.500" width="2.700" height="2.700"/><rect x="849.200" y="329.500" width="2.700" height="2.700"/><rect x="841.500" y="338" width="2.700" height="2.700"/><rect x="849.200" y="338" width="2.700" height="2.700"/></g>
<path d="M869.400 330.300h3.800l2.700 2.700v7.700h-6.500z" stroke="#dcdcdc" stroke-width="1.100" fill="none"/><path d="M873 330.300v2.900h2.900" stroke="#dcdcdc" stroke-width=".9" fill="none"/><rect x="866" y="334.800" width="5.800" height="6" fill="#e0e0e0"/>
<rect x="888.800" y="327" width="8.200" height="17" rx="4.100" fill="#3c3c3c" stroke="#4a4a4a" stroke-width=".6"/><circle cx="892.900" cy="331" r="4.200" fill="#dedede"/>
<rect x="702.400" y="385.800" width="11" height="11" rx="1" stroke="#e0e0e0" stroke-width="1.100" fill="none"/><g fill="#e0e0e0"><rect x="703.800" y="387.200" width="2.600" height="2.600"/><rect x="709" y="387.200" width="2.600" height="2.600"/><rect x="706.400" y="389.800" width="2.600" height="2.600"/><rect x="703.800" y="392.400" width="2.600" height="2.600"/><rect x="709" y="392.400" width="2.600" height="2.600"/></g>
<g fill="#e0e0e0"><path d="M737.400 384.300c-2.600 1.500-5.800 4.600-7.700 7.500l2.100 2c2.600-2.300 4.800-6.100 5.600-9.500z"/><path d="M728.900 392.700c-2-.2-3.300 1.100-3.500 2.900-.1 .9-.4 1.700-1.100 2.200 2.600 .6 5.300-.3 6.100-2.300 .4-1 .1-2.100-.5-2.700z"/></g>
<g stroke="#e0e0e0" stroke-width="1.100" fill="none"><path d="M751.500 386.800V396M746.900 391.400H756.100"/></g><g fill="#e0e0e0"><path d="M751.500 384.900l2.400 2.900h-4.800zM751.500 397.900l2.400-2.900h-4.800zM745 391.400l2.900-2.400v4.800zM758 391.400l-2.900-2.400v4.800z"/></g>
<g stroke="#e0e0e0" stroke-width="1.100" fill="none"><path d="M770 384.800V394.600H781M767.200 387.600H774.500L778.200 391.200V397.600"/><path d="M774.500 387.600v3.600h3.700" stroke-width=".9"/></g><g stroke="#cfcfcf" stroke-width="1" stroke-dasharray="1 1.200" fill="none"><path d="M776 385.200h5v4"/><path d="M767.200 390v7h8"/></g>
<rect x="791.200" y="390.200" width="9.600" height="7" rx="1" fill="#e4e4e4"/><path d="M793.400 390.200v-1.800a2.600 2.600 0 0 1 5.200 0v1.800" stroke="#e4e4e4" stroke-width="1.400" fill="none"/><circle cx="796" cy="393.600" r="1.100" fill="#535353"/>
<path d="M701 423.800l3 4.100 -3 4.100" stroke="#d8d8d8" stroke-width="1.200" fill="none"/>
<path d="M698.800 465.800l4.200 4.200 4.200-4.200" stroke="#d8d8d8" stroke-width="1.200" fill="none"/>
<path d="M701 681.500l3 4.100 -2.500 3.400" stroke="#d8d8d8" stroke-width="1.200" fill="none"/>
<path d="M925.200 511.300l3.400-3.400 3.400 3.400" stroke="#e6e6e6" stroke-width="1.400" fill="none"/>
<path d="M711 421.300h5.200l1 1.500h8v9.500h-14.200z" fill="#dcdcdc"/><path d="M711 423.600h14.200" stroke="#535353" stroke-width=".5"/>
<path d="M711.500 462.500h4.800l1 1.500h7.400v4" stroke="#dcdcdc" stroke-width="1.100" fill="none"/><path d="M711.500 462.500v10.500" stroke="#dcdcdc" stroke-width="1.100"/><path d="M711 467.300h14.200v6.200h-14.200z" fill="#dcdcdc"/>
<path d="M711 680h5.200l1 1.500h8v7.500h-14.200z" fill="#dcdcdc"/><path d="M711 682.300h14.200" stroke="#535353" stroke-width=".5"/>
<g stroke="#dcdcdc" stroke-width="1.300" fill="none"><rect x="732.1" y="420.90000000000003" width="5.800" height="7.2" rx="2.900"/><rect x="732.1" y="426.8" width="5.800" height="7.2" rx="2.900"/></g><path d="M735 424.6V430.4" stroke="#dcdcdc" stroke-width="1.300"/>
<g stroke="#dcdcdc" stroke-width="1.300" fill="none"><rect x="732.1" y="461.6" width="5.800" height="7.2" rx="2.900"/><rect x="732.1" y="467.5" width="5.800" height="7.2" rx="2.900"/></g><path d="M735 465.3V471.1" stroke="#dcdcdc" stroke-width="1.300"/>
<g stroke="#dcdcdc" stroke-width="1.300" fill="none"><rect x="751.7" y="502.6" width="5.800" height="7.2" rx="2.900"/><rect x="751.7" y="508.5" width="5.800" height="7.2" rx="2.900"/></g><path d="M754.6 506.3V512.1" stroke="#dcdcdc" stroke-width="1.300"/>
<g stroke="#dcdcdc" stroke-width="1.300" fill="none"><path d="M732.100 689v-5.500a2.900 2.900 0 0 1 5.800 0V689"/></g><path d="M735 684.500V689" stroke="#dcdcdc" stroke-width="1.300"/>
<g stroke="#f4f4f4" stroke-width="1.400" fill="none"><path d="M713.300 496.500v-5.400h11.500M737.300 491.100h11.600v5.400M713.300 521.600v5.700h11.500M737.300 527.300h11.600v-5.700"/></g>
<path d="M729.500 498.200L735 498C736.500 499.500 738 500.500 738 502C737.500 505 736.500 508.500 735.800 511.500L732.600 511.500L732.600 520C730 520.600 727.500 520.500 726 520C724.500 517 723 513 722.800 509.500C722.800 505 724.500 501 729.500 498.200Z" fill="#2451ab" stroke="#9db8e8" stroke-width=".8" stroke-opacity=".6"/>
<g stroke="#d8d8d8" stroke-width=".9" fill="#8e8e8e" stroke-linejoin="round"><path d="M740.200 514l4.800 2.200v5.600l-4.800 2.400 -4.800-2.400v-5.600z"/><path d="M735.400 516.200l4.800 2.200 4.800-2.200M740.200 518.400v5.800" fill="none"/></g>
<path d="M786 501c.5 3.200 .5 7-.1 10.200 -1.900-.2-2.900-1.500-2.800-3.300 .2-2.600 1.400-5.200 2.900-6.900z" fill="#0a0a0a"/><path d="M776.800 499.800l2.200 .4" stroke="#9a9a9a" stroke-width=".8"/>
<path d="M718.300 654.200h24.600" stroke="#4a4a4a" stroke-width=".9"/><path d="M731.600 655l2 2.800h-4z" fill="#111"/>
<g stroke="#9a9a9a" stroke-width="1.200" fill="none"><path d="M752 699.200h-2.400a2.700 2.700 0 0 0 0 5.400h2.400M754.600 699.200h2.400a2.700 2.700 0 0 1 0 5.400h-2.400"/></g><path d="M750.200 701.900h6.200" stroke="#9a9a9a" stroke-width="1.200"/>
<text x="774.600" y="706.400" font-family="Liberation Sans" font-style="italic" font-size="13.500" fill="#e0e0e0">fx</text><path d="M785.200 708.200h3l-1.500 1.600z" fill="#e0e0e0"/>
<rect x="801.200" y="696.400" width="13" height="9.600" fill="#e6e6e6"/><circle cx="807.700" cy="701.200" r="3" fill="#474747"/>
<circle cx="834.600" cy="701.200" r="4.900" stroke="#e0e0e0" stroke-width="1.100" fill="none"/><path d="M838.100 697.700A4.900 4.900 0 0 1 831.100 704.700z" fill="#e0e0e0"/><path d="M840.300 707.800h3l-1.500 1.600z" fill="#e0e0e0"/>
<path d="M855.200 696.300h5l1 1.500h6.200v8.300h-12.200z" fill="#dcdcdc"/><path d="M855.200 698.600h12.200" stroke="#535353" stroke-width=".5"/>
<rect x="883.600" y="696.700" width="10" height="9.800" stroke="#e0e0e0" stroke-width="1.200" fill="none"/><path d="M888.600 699v5.200M886 701.600h5.200" stroke="#e0e0e0" stroke-width="1.200"/>
<g stroke="#e0e0e0" stroke-width="1.100" fill="none"><path d="M911.700 698.600l.6 8.400h6.200l.6-8.400z"/><path d="M910.300 698.300h10.200M913.600 698v-1.700h3.600V698"/><path d="M913.900 700.400v4.800M915.400 700.400v4.800M916.900 700.400v4.800" stroke-width=".7"/></g>
</svg>
<div class="abs" style="left:56px;top:714px;width:894px;height:1px;background:#3c3c3c"></div>
<div class="abs" style="left:56px;top:38px;width:1px;height:56px;background:#444"></div>
<div class="abs" style="left:949px;top:38px;width:1px;height:56px;background:#444"></div>
</div>
</div></div>
</body></html>
